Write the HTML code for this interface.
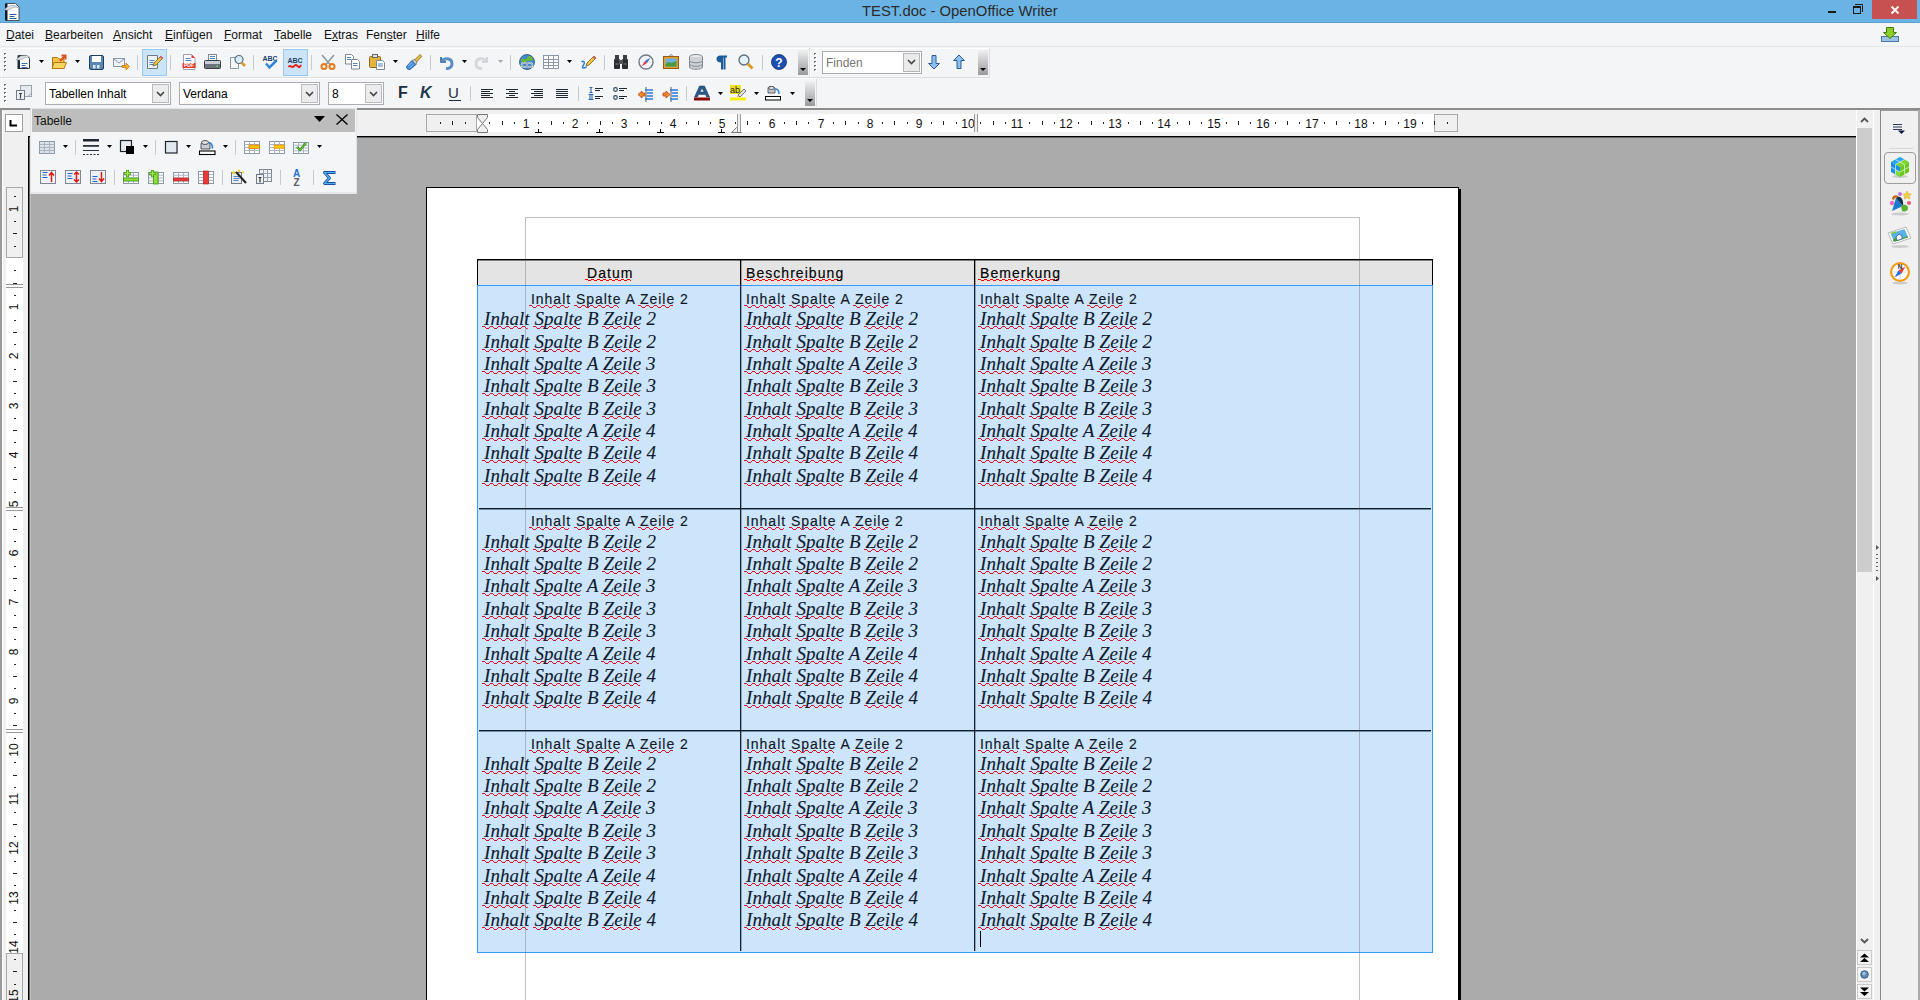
<!DOCTYPE html><html><head><meta charset="utf-8"><title>TEST.doc - OpenOffice Writer</title><style>
*{margin:0;padding:0;box-sizing:border-box}
html,body{width:1920px;height:1000px;overflow:hidden;background:#ababab;font-family:"Liberation Sans",sans-serif}
body{position:relative}
.a{position:absolute}
.t{position:absolute;white-space:nowrap;line-height:1}
svg{position:absolute;overflow:visible}
u{text-decoration:underline;text-underline-offset:1px}
.w{position:relative}
.wv{position:absolute;left:-2px;width:100%;height:3px;overflow:hidden;z-index:-1}
.t{z-index:0}
</style></head><body>
<div class="a" style="left:0px;top:0px;width:1920px;height:22px;background:#6ab4e5"></div>
<div class="a" style="left:0px;top:22px;width:1920px;height:1px;background:#5c9fcd"></div>
<div class="t" style="left:862px;top:4px;font-size:14.85px;color:#2b2b2b">TEST.doc - OpenOffice Writer</div>
<svg style="left:4px;top:3px" width="16" height="16" viewBox="0 0 16 16"><path d="M2.5 0.5h9l3.5 3.5v13.5h-12.5z" fill="#fff" stroke="#333" stroke-width="0.8"/><path d="M1 0.5h2.5v17H1z" fill="#0d1a2a"/><path d="M0 7c3-4 7-5 10-4.5 2 0 3 1 4 2-3-1-6 0-9 2.5z" fill="#d8dde3" stroke="#7a8590" stroke-width="0.5"/><path d="M5.5 11.5h7M5.5 13.5h5M5.5 15.5h7" stroke="#2a5a9a" stroke-width="1"/></svg>
<div class="a" style="left:1828px;top:11px;width:8px;height:2px;background:#1a1a1a"></div>
<svg style="left:1853px;top:4px" width="11" height="10" viewBox="0 0 11 10"><rect x="0.5" y="2.5" width="7" height="7" fill="none" stroke="#1a1a1a"/><rect x="0" y="2" width="8" height="2" fill="#1a1a1a"/><path d="M2 0.5h7.5V8" fill="none" stroke="#1a1a1a"/></svg>
<div class="a" style="left:1872px;top:0px;width:45px;height:19px;background:#c75050"></div>
<svg style="left:1891px;top:6px" width="8" height="8" viewBox="0 0 8 8"><path d="M0.5 0.5l7 7M7.5 0.5l-7 7" stroke="#fff" stroke-width="1.8"/></svg>
<div class="a" style="left:0px;top:23px;width:1920px;height:24px;background:#f4f5f7"></div>
<div class="a" style="left:0px;top:46px;width:1920px;height:1px;background:#e6e7e9"></div>
<div class="t" style="left:6px;top:29px;font-size:12px;color:#111"><u>D</u>atei</div>
<div class="t" style="left:45px;top:29px;font-size:12px;color:#111"><u>B</u>earbeiten</div>
<div class="t" style="left:113px;top:29px;font-size:12px;color:#111"><u>A</u>nsicht</div>
<div class="t" style="left:165px;top:29px;font-size:12px;color:#111"><u>E</u>infügen</div>
<div class="t" style="left:224px;top:29px;font-size:12px;color:#111"><u>F</u>ormat</div>
<div class="t" style="left:274px;top:29px;font-size:12px;color:#111"><u>T</u>abelle</div>
<div class="t" style="left:324px;top:29px;font-size:12px;color:#111">E<u>x</u>tras</div>
<div class="t" style="left:366px;top:29px;font-size:12px;color:#111">Fen<u>s</u>ter</div>
<div class="t" style="left:416px;top:29px;font-size:12px;color:#111"><u>H</u>ilfe</div>
<svg style="left:1880px;top:26px" width="20" height="17" viewBox="0 0 20 17"><rect x="1.5" y="10.5" width="17" height="5" fill="#9cc3e6" stroke="#4a78a8"/><path d="M6.5 1.5h7v5h3l-6.5 6-6.5-6h3z" fill="#8ccf2a" stroke="#3d7a0a"/></svg>
<div class="a" style="left:0px;top:47px;width:1920px;height:61px;background:#f4f5f7"></div>
<div class="a" style="left:0px;top:77px;width:990px;height:1px;background:#dcdde0"></div>
<div class="a" style="left:0px;top:108px;width:1920px;height:2px;background:#8c8c8c"></div>
<div class="a" style="left:1px;top:48px;width:809px;height:29px;border-left:1px solid #fff;border-top:1px solid #fff"></div>
<div class="a" style="left:809px;top:48px;width:1px;height:29px;background:#e0e1e4"></div>
<div class="a" style="left:810px;top:48px;width:180px;height:29px;border-left:1px solid #fff;border-top:1px solid #fff;border-right:1px solid #dcdde0"></div>
<div class="a" style="left:1px;top:78px;width:816px;height:29px;border-left:1px solid #fff;border-top:1px solid #fff;border-right:1px solid #dcdde0"></div>
<svg style="left:4px;top:53px" width="4" height="20" viewBox="0 0 4 20"><rect x="1" y="1" width="2" height="2" fill="#fff"/><rect x="0" y="0" width="2" height="1" fill="#6a6a6a"/><rect x="0" y="1" width="1" height="1" fill="#8a8a8a"/><rect x="1" y="5" width="2" height="2" fill="#fff"/><rect x="0" y="4" width="2" height="1" fill="#6a6a6a"/><rect x="0" y="5" width="1" height="1" fill="#8a8a8a"/><rect x="1" y="9" width="2" height="2" fill="#fff"/><rect x="0" y="8" width="2" height="1" fill="#6a6a6a"/><rect x="0" y="9" width="1" height="1" fill="#8a8a8a"/><rect x="1" y="13" width="2" height="2" fill="#fff"/><rect x="0" y="12" width="2" height="1" fill="#6a6a6a"/><rect x="0" y="13" width="1" height="1" fill="#8a8a8a"/><rect x="1" y="17" width="2" height="2" fill="#fff"/><rect x="0" y="16" width="2" height="1" fill="#6a6a6a"/><rect x="0" y="17" width="1" height="1" fill="#8a8a8a"/></svg>
<svg style="left:16px;top:54px" width="16" height="16" viewBox="0 0 16 16"><path d="M2.5 1.5h8l3 3v10h-11z" fill="#fff" stroke="#3a3f46"/><path d="M1.5 1.5h2.5v13.5H1.5z" fill="#1b2a3a"/><path d="M0 6c3-4 7-5 10-4.5 2 0 3 1 4 2-3-1-6 0-9 2.5z" fill="#d8dde3" stroke="#7a8590" stroke-width="0.5"/><path d="M5.5 9.5h6M5.5 11.5h4M5.5 13.5h6" stroke="#3a6fb0"/></svg>
<svg style="left:39px;top:60px" width="5" height="3" viewBox="0 0 5 3"><path d="M0 0h5L2.5 3z" fill="#000"/></svg>
<svg style="left:51px;top:54px" width="16" height="16" viewBox="0 0 16 16"><path d="M1.5 3.5h5l1.5 1.5h5v9.5h-11.5z" fill="#f5c342" stroke="#b7761a"/><path d="M3 8.5h12.5l-2.5 6H1z" fill="#fbd760" stroke="#b7761a"/><path d="M9 7l5-5M10.5 1.5h4v4" stroke="#e0521b" stroke-width="2" fill="none"/></svg>
<svg style="left:75px;top:60px" width="5" height="3" viewBox="0 0 5 3"><path d="M0 0h5L2.5 3z" fill="#000"/></svg>
<svg style="left:88px;top:55px" width="16" height="16" viewBox="0 0 16 16"><rect x="1.5" y="0.5" width="14" height="14" rx="1.5" fill="#5b86ad" stroke="#1d3f66"/><rect x="4" y="1" width="9" height="6" fill="#fff"/><rect x="5" y="10" width="2.5" height="3.5" fill="#dfe6ee"/><rect x="9" y="10" width="2.5" height="3.5" fill="#dfe6ee"/></svg>
<svg style="left:113px;top:56px" width="16" height="16" viewBox="0 0 16 16"><rect x="0.5" y="2.5" width="11" height="8" fill="#eef1f5" stroke="#8a98a8"/><path d="M0.5 2.5l5.5 4.5 5.5-4.5" stroke="#8a98a8" fill="none"/><path d="M9 9.5h4v-2.5l3.5 3.5-3.5 3.5v-2.5h-4z" fill="#f5b72a" stroke="#c0761a" stroke-width="0.8"/></svg>
<div class="a" style="left:137px;top:55px;width:1px;height:15px;background:#c8c9cc"></div>
<div class="a" style="left:142px;top:49px;width:25px;height:27px;background:#cce4f7;border:1px solid #99c9f0"></div>
<svg style="left:146px;top:54px" width="16" height="16" viewBox="0 0 16 16"><path d="M1.5 1.5h10v13h-10z" fill="#eef2f7" stroke="#6f7a86"/><path d="M3.5 6.5h5M3.5 8.5h4M3.5 10.5h5" stroke="#4f82c0"/><path d="M7 12l1-3 6.5-6.5 2 2L10 11z" fill="#f3c83a" stroke="#6a5a2a" stroke-width="0.8"/><path d="M14.5 2.5l2 2" stroke="#e05a70" stroke-width="2"/></svg>
<div class="a" style="left:170px;top:55px;width:1px;height:15px;background:#c8c9cc"></div>
<svg style="left:181px;top:54px" width="16" height="16" viewBox="0 0 16 16"><path d="M2.5 0.5h8l3.5 3.5v11.5h-11.5z" fill="#fff" stroke="#9aa3ad"/><path d="M10.5 0.5v3.5h3.5" fill="#e33" /><path d="M4.5 4.5h5M4.5 6.5h6" stroke="#4f82c0"/><rect x="1.5" y="9" width="13" height="5" fill="#e03a2a"/><text x="8" y="13.3" font-size="5" font-family="Liberation Sans" font-weight="bold" fill="#fff" text-anchor="middle">PDF</text></svg>
<svg style="left:204px;top:54px" width="16" height="16" viewBox="0 0 16 16"><rect x="4.5" y="0.5" width="8" height="6" fill="#fff" stroke="#7d8894"/><path d="M6 2.5h5M6 4.5h5" stroke="#4f82c0"/><rect x="0.5" y="6.5" width="16" height="8" rx="1" fill="#6c737b" stroke="#3a3f46"/><rect x="1" y="7" width="15" height="3" fill="#c9ced4"/><rect x="12" y="11.5" width="2" height="1.5" fill="#5c5"/></svg>
<svg style="left:229px;top:54px" width="16" height="16" viewBox="0 0 16 16"><path d="M1.5 3.5h8v11h-8z" fill="#f4f6f8" stroke="#8a96a3"/><circle cx="10" cy="5.5" r="4" fill="#d7ecfa" stroke="#5b6b7a" stroke-width="1.2"/><path d="M12.5 8.5l3.5 3.5" stroke="#d79a2a" stroke-width="2.5"/></svg>
<div class="a" style="left:253px;top:55px;width:1px;height:15px;background:#c8c9cc"></div>
<svg style="left:262px;top:54px" width="16" height="16" viewBox="0 0 16 16"><text x="8" y="6.5" font-size="7" font-family="Liberation Sans" font-weight="bold" fill="#1d3f66" text-anchor="middle">ABC</text><path d="M4 9.5l3.5 4 7-7" stroke="#2f86d9" stroke-width="2.5" fill="none"/></svg>
<div class="a" style="left:283px;top:49px;width:25px;height:27px;background:#cce4f7;border:1px solid #99c9f0"></div>
<svg style="left:287px;top:56px" width="16" height="16" viewBox="0 0 16 16"><text x="8" y="7" font-size="7" font-family="Liberation Sans" font-weight="bold" fill="#1d3f66" text-anchor="middle">ABC</text><path d="M1.5 11c2-3 3 1.5 5-0.5s3-2 4.5 0 2-1 3.5-1" stroke="#e0201a" stroke-width="2" fill="none"/></svg>
<div class="a" style="left:311px;top:55px;width:1px;height:15px;background:#c8c9cc"></div>
<svg style="left:320px;top:54px" width="16" height="16" viewBox="0 0 16 16"><path d="M2 1l8.5 10M14 1L5.5 11" stroke="#8a96a3" stroke-width="1.5"/><circle cx="4" cy="12.5" r="2.5" fill="none" stroke="#e87a1a" stroke-width="2"/><circle cx="12" cy="12.5" r="2.5" fill="none" stroke="#e87a1a" stroke-width="2"/></svg>
<svg style="left:345px;top:54px" width="16" height="16" viewBox="0 0 16 16"><path d="M0.5 0.5h6l2 2v7.5h-8z" fill="#fff" stroke="#7d8894"/><path d="M2 3.5h4M2 5.5h4" stroke="#4f82c0"/><path d="M6.5 5.5h6l2 2v7.5h-8z" fill="#fff" stroke="#7d8894"/><path d="M8 9.5h4.5M8 11.5h4.5" stroke="#4f82c0"/></svg>
<svg style="left:369px;top:54px" width="16" height="16" viewBox="0 0 16 16"><rect x="0.5" y="2.5" width="11" height="11" rx="1" fill="#e6b43a" stroke="#8a6a20"/><rect x="3.5" y="0.5" width="5" height="3" fill="#dfe3e8" stroke="#666"/><path d="M7.5 6.5h6l2 2v7h-8z" fill="#fff" stroke="#7d8894"/><path d="M9 10h5M9 12h5" stroke="#4f82c0"/></svg>
<svg style="left:393px;top:60px" width="5" height="3" viewBox="0 0 5 3"><path d="M0 0h5L2.5 3z" fill="#000"/></svg>
<svg style="left:406px;top:54px" width="16" height="16" viewBox="0 0 16 16"><path d="M0.5 12.5L6 6.5l4 4-6 5c-2 0.5-3.5-1-3.5-3z" fill="#3f8ee0" stroke="#1d4f9a" stroke-width="0.8"/><path d="M2 12l4-3.5M3.5 14l4-3.5" stroke="#9cc8f0" stroke-width="0.8"/><path d="M8.5 6l5.5-5.5 1.8 1.8L10.5 8z" fill="#e8b83a" stroke="#8a6a20" stroke-width="0.8"/><path d="M6 6.5l2.5-1 2.5 2.5-1 2.5z" fill="#c8ced6" stroke="#555" stroke-width="0.6"/></svg>
<div class="a" style="left:430px;top:55px;width:1px;height:15px;background:#c8c9cc"></div>
<svg style="left:438px;top:54px" width="16" height="16" viewBox="0 0 16 16"><path d="M3 3v5h5" stroke="#2a5a8a" stroke-width="1.5" fill="#7fb0e0"/><path d="M4 7.5c2-4 10-4 10 2.5 0 3-3 5-6 4.5" stroke="#5b8ec0" stroke-width="3" fill="none"/></svg>
<svg style="left:462px;top:60px" width="5" height="3" viewBox="0 0 5 3"><path d="M0 0h5L2.5 3z" fill="#000"/></svg>
<svg style="left:474px;top:54px" width="16" height="16" viewBox="0 0 16 16"><path d="M13 3v5H8" stroke="#c8cbd0" stroke-width="1.5" fill="#e0e2e5"/><path d="M12 7.5c-2-4-10-4-10 2.5 0 3 3 5 6 4.5" stroke="#d5d8dc" stroke-width="3" fill="none"/></svg>
<svg style="left:498px;top:60px" width="5" height="3" viewBox="0 0 5 3"><path d="M0 0h5L2.5 3z" fill="#aaa"/></svg>
<div class="a" style="left:510px;top:55px;width:1px;height:15px;background:#c8c9cc"></div>
<svg style="left:519px;top:54px" width="16" height="16" viewBox="0 0 16 16"><circle cx="8" cy="8" r="7.5" fill="#3f8ad0" stroke="#2a4a6a" stroke-width="0.8"/><path d="M2 5c2-1 3 1 5 0s1-3 4-3c2 1 3 2 3 4-2 0-3 1-5 1s-2 2-4 2-3-1-3-4z" fill="#6ab83a"/><rect x="2.5" y="9" width="5.5" height="4" rx="2" fill="none" stroke="#fff" stroke-width="1.6"/><rect x="8" y="9" width="5.5" height="4" rx="2" fill="none" stroke="#fff" stroke-width="1.6"/><rect x="2.5" y="9" width="5.5" height="4" rx="2" fill="none" stroke="#2a4a5a" stroke-width="0.5"/><rect x="8" y="9" width="5.5" height="4" rx="2" fill="none" stroke="#2a4a5a" stroke-width="0.5"/></svg>
<svg style="left:543px;top:55px" width="16" height="16" viewBox="0 0 16 16"><rect x="0.5" y="0.5" width="15" height="13" fill="#fff" stroke="#8a98a8"/><path d="M0.5 4.5h15M0.5 7.5h15M0.5 10.5h15M5.5 0.5v13M10.5 0.5v13" stroke="#8a98a8"/></svg>
<svg style="left:567px;top:60px" width="5" height="3" viewBox="0 0 5 3"><path d="M0 0h5L2.5 3z" fill="#000"/></svg>
<svg style="left:580px;top:54px" width="16" height="16" viewBox="0 0 16 16"><path d="M1.5 8c2-2 4 0 2 3s-1 4 3 2" stroke="#2f7fd9" stroke-width="1.5" fill="none"/><path d="M6 12l1-3 7-7 2 2-7 7z" fill="#f3c83a" stroke="#6a5a2a" stroke-width="0.8"/><path d="M13.5 2.5l2 2" stroke="#e05a70" stroke-width="2"/></svg>
<div class="a" style="left:604px;top:55px;width:1px;height:15px;background:#c8c9cc"></div>
<svg style="left:613px;top:54px" width="16" height="16" viewBox="0 0 16 16"><rect x="1" y="5" width="6" height="10" rx="1" fill="#2a2d31"/><rect x="9" y="5" width="6" height="10" rx="1" fill="#2a2d31"/><rect x="2" y="1" width="4" height="5" fill="#3a3f46"/><rect x="10" y="1" width="4" height="5" fill="#3a3f46"/><rect x="6" y="6" width="4" height="4" fill="#555"/><path d="M2.5 10h3M10.5 10h3" stroke="#888"/></svg>
<svg style="left:638px;top:54px" width="16" height="16" viewBox="0 0 16 16"><circle cx="8" cy="8" r="7" fill="#f4f7fa" stroke="#6f7a86" stroke-width="1.4"/><path d="M3 8h10M8 3v10" stroke="#ccd" stroke-width="0.6"/><path d="M12.5 3.5L9 9 7 7z" fill="#2f6fd9"/><path d="M3.5 12.5L7 7 9 9z" fill="#e33"/></svg>
<svg style="left:663px;top:54px" width="16" height="16" viewBox="0 0 16 16"><path d="M5 3l3-2.5 3 2.5" stroke="#7d8894" fill="none"/><rect x="0.5" y="2.5" width="15" height="12" fill="#e0a030" stroke="#9a5a10"/><rect x="2.5" y="4.5" width="11" height="8" fill="#6ab0e5"/><path d="M2.5 10l3-2 3 1 5-2v5.5h-11z" fill="#4a9a3a"/></svg>
<svg style="left:689px;top:54px" width="16" height="16" viewBox="0 0 16 16"><ellipse cx="7" cy="3" rx="6.5" ry="2.5" fill="#e9ebee" stroke="#7d8894"/><path d="M0.5 3v10c0 3 13 3 13 0V3" fill="#cfd3d8" stroke="#7d8894"/><path d="M0.5 6.5c0 3 13 3 13 0M0.5 10c0 3 13 3 13 0" stroke="#7d8894" fill="none"/></svg>
<svg style="left:715px;top:54px" width="16" height="16" viewBox="0 0 16 16"><path d="M5 1.5h7v2h-1.5v12H8.5V3.5H8v12H6V8.5C3 8.5 1.5 7 1.5 5S3 1.5 5 1.5z" fill="#1d5a9a"/></svg>
<svg style="left:738px;top:54px" width="16" height="16" viewBox="0 0 16 16"><circle cx="6" cy="6" r="5" fill="#e3f1fb" stroke="#5b6b7a" stroke-width="1.3"/><path d="M9.5 9.5l5 5" stroke="#d79a2a" stroke-width="3"/></svg>
<div class="a" style="left:762px;top:55px;width:1px;height:15px;background:#c8c9cc"></div>
<svg style="left:771px;top:54px" width="16" height="16" viewBox="0 0 16 16"><circle cx="8" cy="8" r="7.5" fill="#1d4fb0" stroke="#0d2a70" stroke-width="0.8"/><text x="8" y="13" font-size="12" font-weight="bold" font-family="Liberation Sans" fill="#fff" text-anchor="middle">?</text></svg>
<div class="a" style="left:798px;top:50px;width:10px;height:25px;background:linear-gradient(#f0f0f0,#9a9a9a)"></div>
<svg style="left:800px;top:68px" width="6" height="4" viewBox="0 0 6 4"><path d="M0 0h6L3 3z" fill="#000"/></svg>
<svg style="left:814px;top:53px" width="4" height="20" viewBox="0 0 4 20"><rect x="1" y="1" width="2" height="2" fill="#fff"/><rect x="0" y="0" width="2" height="1" fill="#6a6a6a"/><rect x="0" y="1" width="1" height="1" fill="#8a8a8a"/><rect x="1" y="5" width="2" height="2" fill="#fff"/><rect x="0" y="4" width="2" height="1" fill="#6a6a6a"/><rect x="0" y="5" width="1" height="1" fill="#8a8a8a"/><rect x="1" y="9" width="2" height="2" fill="#fff"/><rect x="0" y="8" width="2" height="1" fill="#6a6a6a"/><rect x="0" y="9" width="1" height="1" fill="#8a8a8a"/><rect x="1" y="13" width="2" height="2" fill="#fff"/><rect x="0" y="12" width="2" height="1" fill="#6a6a6a"/><rect x="0" y="13" width="1" height="1" fill="#8a8a8a"/><rect x="1" y="17" width="2" height="2" fill="#fff"/><rect x="0" y="16" width="2" height="1" fill="#6a6a6a"/><rect x="0" y="17" width="1" height="1" fill="#8a8a8a"/></svg>
<div class="a" style="left:822px;top:51px;width:100px;height:23px;background:#fff;border:1px solid #a9aaad"></div>
<div class="a" style="left:903px;top:53px;width:17px;height:19px;background:#eaeaea;border:1px solid #b5b6b9"></div>
<svg style="left:907px;top:59px" width="9" height="6" viewBox="0 0 9 6"><path d="M1 1l3.5 3.5L8 1" stroke="#444" stroke-width="1.6" fill="none"/></svg>
<div class="t" style="left:826px;top:57px;font-size:12px;color:#777">Finden</div>
<svg style="left:927px;top:54px" width="14" height="16" viewBox="0 0 14 16"><path d="M5 1.5h4v8h3.5L7 15 1.5 9.5H5z" fill="#8ec0ee" stroke="#2a5a9a"/></svg>
<svg style="left:952px;top:54px" width="14" height="16" viewBox="0 0 14 16"><path d="M5 14.5h4v-8h3.5L7 1 1.5 6.5H5z" fill="#8ec0ee" stroke="#2a5a9a"/></svg>
<div class="a" style="left:978px;top:50px;width:10px;height:25px;background:linear-gradient(#f0f0f0,#9a9a9a)"></div>
<svg style="left:980px;top:68px" width="6" height="4" viewBox="0 0 6 4"><path d="M0 0h6L3 3z" fill="#000"/></svg>
<svg style="left:4px;top:84px" width="4" height="20" viewBox="0 0 4 20"><rect x="1" y="1" width="2" height="2" fill="#fff"/><rect x="0" y="0" width="2" height="1" fill="#6a6a6a"/><rect x="0" y="1" width="1" height="1" fill="#8a8a8a"/><rect x="1" y="5" width="2" height="2" fill="#fff"/><rect x="0" y="4" width="2" height="1" fill="#6a6a6a"/><rect x="0" y="5" width="1" height="1" fill="#8a8a8a"/><rect x="1" y="9" width="2" height="2" fill="#fff"/><rect x="0" y="8" width="2" height="1" fill="#6a6a6a"/><rect x="0" y="9" width="1" height="1" fill="#8a8a8a"/><rect x="1" y="13" width="2" height="2" fill="#fff"/><rect x="0" y="12" width="2" height="1" fill="#6a6a6a"/><rect x="0" y="13" width="1" height="1" fill="#8a8a8a"/><rect x="1" y="17" width="2" height="2" fill="#fff"/><rect x="0" y="16" width="2" height="1" fill="#6a6a6a"/><rect x="0" y="17" width="1" height="1" fill="#8a8a8a"/></svg>
<svg style="left:16px;top:85px" width="16" height="16" viewBox="0 0 16 16"><rect x="4.5" y="0.5" width="11" height="11" fill="#e6ebf0" stroke="#9aa3ad"/><path d="M12 11.5l3.5-3.5" stroke="#9aa3ad"/><rect x="0.5" y="5.5" width="8" height="9" fill="#eef1f4" stroke="#6f7a86"/><path d="M3 8.5h3M4.5 8.5v5" stroke="#3a3f46" stroke-width="1.2"/></svg>
<div class="a" style="left:45px;top:82px;width:126px;height:23px;background:#fff;border:1px solid #abadb3"></div>
<div class="a" style="left:152px;top:84px;width:17px;height:19px;background:#ececec;border:1px solid #b9babd"></div>
<svg style="left:156px;top:91px" width="9" height="6" viewBox="0 0 9 6"><path d="M1 1l3.5 3.5L8 1" stroke="#444" stroke-width="1.6" fill="none"/></svg>
<div class="t" style="left:49px;top:88px;font-size:12px;color:#000">Tabellen Inhalt</div>
<div class="a" style="left:179px;top:82px;width:141px;height:23px;background:#fff;border:1px solid #abadb3"></div>
<div class="a" style="left:301px;top:84px;width:17px;height:19px;background:#ececec;border:1px solid #b9babd"></div>
<svg style="left:305px;top:91px" width="9" height="6" viewBox="0 0 9 6"><path d="M1 1l3.5 3.5L8 1" stroke="#444" stroke-width="1.6" fill="none"/></svg>
<div class="t" style="left:183px;top:88px;font-size:12px;color:#000">Verdana</div>
<div class="a" style="left:328px;top:82px;width:56px;height:23px;background:#fff;border:1px solid #abadb3"></div>
<div class="a" style="left:365px;top:84px;width:17px;height:19px;background:#ececec;border:1px solid #b9babd"></div>
<svg style="left:369px;top:91px" width="9" height="6" viewBox="0 0 9 6"><path d="M1 1l3.5 3.5L8 1" stroke="#444" stroke-width="1.6" fill="none"/></svg>
<div class="t" style="left:332px;top:88px;font-size:12px;color:#000">8</div>
<div class="t" style="left:398px;top:85px;font-size:16px;font-weight:bold;color:#1d2d3d">F</div>
<div class="t" style="left:420px;top:85px;font-size:16px;font-weight:bold;font-style:italic;color:#1d3a50">K</div>
<div class="t" style="left:448px;top:85px;font-size:15px;color:#1d2d3d">U</div>
<div class="a" style="left:449px;top:100px;width:12px;height:1px;background:#1d2d3d"></div>
<div class="a" style="left:470px;top:86px;width:1px;height:15px;background:#c8c9cc"></div>
<svg style="left:481px;top:89px" width="14" height="10" viewBox="0 0 14 10"><rect x="0" y="0" width="12" height="1" fill="#1d2833"/><rect x="0" y="2" width="9" height="1" fill="#1d2833"/><rect x="0" y="4" width="12" height="1" fill="#1d2833"/><rect x="0" y="6" width="9" height="1" fill="#1d2833"/><rect x="0" y="8" width="12" height="1" fill="#1d2833"/></svg>
<svg style="left:506px;top:89px" width="14" height="10" viewBox="0 0 14 10"><rect x="0" y="0" width="12" height="1" fill="#1d2833"/><rect x="3" y="2" width="6" height="1" fill="#1d2833"/><rect x="0" y="4" width="12" height="1" fill="#1d2833"/><rect x="3" y="6" width="6" height="1" fill="#1d2833"/><rect x="0" y="8" width="12" height="1" fill="#1d2833"/></svg>
<svg style="left:531px;top:89px" width="14" height="10" viewBox="0 0 14 10"><rect x="0" y="0" width="12" height="1" fill="#1d2833"/><rect x="3" y="2" width="9" height="1" fill="#1d2833"/><rect x="0" y="4" width="12" height="1" fill="#1d2833"/><rect x="3" y="6" width="9" height="1" fill="#1d2833"/><rect x="0" y="8" width="12" height="1" fill="#1d2833"/></svg>
<svg style="left:556px;top:89px" width="14" height="10" viewBox="0 0 14 10"><rect x="0" y="0" width="12" height="1" fill="#1d2833"/><rect x="0" y="2" width="12" height="1" fill="#1d2833"/><rect x="0" y="4" width="12" height="1" fill="#1d2833"/><rect x="0" y="6" width="12" height="1" fill="#1d2833"/><rect x="0" y="8" width="12" height="1" fill="#1d2833"/></svg>
<div class="a" style="left:578px;top:86px;width:1px;height:15px;background:#c8c9cc"></div>
<svg style="left:588px;top:86px" width="16" height="16" viewBox="0 0 16 16"><path d="M1.5 1.5h3M3 1.5v5M1.5 6.5h3M0.5 8.5h5M2 8.5v5M4 8.5v5M0.5 13.5h5" stroke="#2f6aa8" stroke-width="1.1"/><path d="M7 2.5h8M7 4.5h5M7 10.5h8M7 12.5h5" stroke="#1d2833" stroke-width="1"/></svg>
<svg style="left:613px;top:86px" width="16" height="16" viewBox="0 0 16 16"><circle cx="2.5" cy="3.5" r="1.8" fill="#fff" stroke="#2a4a6a" stroke-width="1.2"/><circle cx="2.5" cy="11.5" r="1.8" fill="#fff" stroke="#2a4a6a" stroke-width="1.2"/><path d="M6 2.5h8M6 4.5h5M6 10.5h8M6 12.5h5" stroke="#1d2833" stroke-width="1"/></svg>
<svg style="left:637px;top:86px" width="16" height="16" viewBox="0 0 16 16"><path d="M9 1v15" stroke="#333" stroke-width="0.8"/><path d="M8 4h8M10 7h6M10 10h6M8 13h8" stroke="#2a7ad9" stroke-width="1.4"/><path d="M1 8.5l4-3.5v2h3v3H5v2z" fill="#f08a2a" stroke="#c0401a" stroke-width="0.8"/></svg>
<svg style="left:662px;top:86px" width="16" height="16" viewBox="0 0 16 16"><path d="M9 1v15" stroke="#333" stroke-width="0.8"/><path d="M8 4h8M10 7h6M10 10h6M8 13h8" stroke="#2a7ad9" stroke-width="1.4"/><path d="M8 8.5L4 5v2H1v3h3v2z" fill="#f08a2a" stroke="#c0401a" stroke-width="0.8"/></svg>
<div class="a" style="left:686px;top:86px;width:1px;height:15px;background:#c8c9cc"></div>
<svg style="left:694px;top:85px" width="16" height="16" viewBox="0 0 16 16"><path d="M5.5 1h5l5 11h-3l-1-2.5h-7l-1 2.5h-3zM6 7h4L8 3z" fill="#2a5a8a" stroke="#1d3a60" stroke-width="0.5" fill-rule="evenodd"/><rect x="0" y="12.5" width="16" height="3" fill="#8a0a0a"/></svg>
<svg style="left:718px;top:92px" width="5" height="3" viewBox="0 0 5 3"><path d="M0 0h5L2.5 3z" fill="#000"/></svg>
<svg style="left:730px;top:85px" width="16" height="16" viewBox="0 0 16 16"><rect x="0" y="0" width="11" height="9" fill="#f0e020"/><text x="0" y="8" font-size="9" font-family="Liberation Sans" fill="#222">ab</text><path d="M8 10l6-6 2 2-6 6z" fill="#dfe3e8" stroke="#555" stroke-width="0.8"/><path d="M8 10l-1 2 2-0.5" fill="#e08030"/><rect x="0" y="12.5" width="16" height="3" fill="#f5ef10"/></svg>
<svg style="left:754px;top:92px" width="5" height="3" viewBox="0 0 5 3"><path d="M0 0h5L2.5 3z" fill="#000"/></svg>
<svg style="left:765px;top:85px" width="16" height="16" viewBox="0 0 16 16"><path d="M3 3c0-2 6-2 7 0v5l-7 0z" fill="#c0c6cc" stroke="#444" stroke-width="0.8"/><ellipse cx="6.5" cy="3" rx="3" ry="1.5" fill="#dfe3e8" stroke="#444" stroke-width="0.8"/><path d="M10 4c3 0 4 2 4 5" stroke="#2f86d9" stroke-width="1.5" fill="none"/><rect x="0.5" y="11.5" width="15" height="3.5" fill="#fff" stroke="#000"/></svg>
<svg style="left:790px;top:92px" width="5" height="3" viewBox="0 0 5 3"><path d="M0 0h5L2.5 3z" fill="#000"/></svg>
<div class="a" style="left:805px;top:81px;width:10px;height:25px;background:linear-gradient(#f0f0f0,#9a9a9a)"></div>
<svg style="left:807px;top:99px" width="6" height="4" viewBox="0 0 6 4"><path d="M0 0h6L3 3z" fill="#000"/></svg>
<div class="a" style="left:0px;top:110px;width:1856px;height:27px;background:#f0f0f0"></div>
<div class="a" style="left:28px;top:136px;width:1828px;height:1px;background:#000"></div>
<div class="a" style="left:28px;top:137px;width:1828px;height:1px;background:#666"></div>
<div class="a" style="left:0px;top:137px;width:28px;height:863px;background:#f0f0f0"></div>
<div class="a" style="left:0px;top:110px;width:2px;height:890px;background:#9a9a9a"></div>
<div class="a" style="left:2px;top:110px;width:1px;height:890px;background:#fff"></div>
<div class="a" style="left:28px;top:137px;width:1px;height:863px;background:#000"></div>
<div class="a" style="left:29px;top:137px;width:1px;height:863px;background:#666"></div>
<div class="a" style="left:30px;top:137px;width:1px;height:863px;background:#bdbdbd"></div>
<div class="a" style="left:5px;top:114px;width:18px;height:18px;background:#fff;border:1px solid #a0a0a0"></div>
<svg style="left:9px;top:120px" width="10" height="8" viewBox="0 0 10 8"><path d="M1.5 0v5.5H8" fill="none" stroke="#000" stroke-width="2"/></svg>
<div class="a" style="left:426px;top:114px;width:51px;height:18px;background:#f0f0f0;border:1px solid #a8a8a8"></div>
<div class="a" style="left:477px;top:114px;width:957px;height:18px;background:#fff"></div>
<div class="a" style="left:1434px;top:114px;width:24px;height:18px;background:#f0f0f0;border:1px solid #a8a8a8"></div>
<div class="a" style="left:6px;top:187px;width:17px;height:71px;background:#f0f0f0;border:1px solid #a8a8a8"></div>
<div class="a" style="left:6px;top:258px;width:17px;height:695px;background:#fff"></div>
<div class="a" style="left:6px;top:953px;width:17px;height:60px;background:#f0f0f0;border:1px solid #a8a8a8"></div>
<div class="a" style="left:440px;top:122px;width:1px;height:2px;background:#222"></div>
<div class="a" style="left:452px;top:121px;width:1px;height:4px;background:#222"></div>
<div class="a" style="left:465px;top:122px;width:1px;height:2px;background:#222"></div>
<div class="a" style="left:489px;top:122px;width:1px;height:2px;background:#222"></div>
<div class="a" style="left:502px;top:121px;width:1px;height:4px;background:#222"></div>
<div class="a" style="left:514px;top:122px;width:1px;height:2px;background:#222"></div>
<div class="t" style="left:514px;top:118px;font-size:12px;color:#111;width:24px;text-align:center">1</div>
<div class="a" style="left:538px;top:122px;width:1px;height:2px;background:#222"></div>
<div class="a" style="left:551px;top:121px;width:1px;height:4px;background:#222"></div>
<div class="a" style="left:563px;top:122px;width:1px;height:2px;background:#222"></div>
<div class="t" style="left:563px;top:118px;font-size:12px;color:#111;width:24px;text-align:center">2</div>
<div class="a" style="left:587px;top:122px;width:1px;height:2px;background:#222"></div>
<div class="a" style="left:600px;top:121px;width:1px;height:4px;background:#222"></div>
<div class="a" style="left:612px;top:122px;width:1px;height:2px;background:#222"></div>
<div class="t" style="left:612px;top:118px;font-size:12px;color:#111;width:24px;text-align:center">3</div>
<div class="a" style="left:637px;top:122px;width:1px;height:2px;background:#222"></div>
<div class="a" style="left:649px;top:121px;width:1px;height:4px;background:#222"></div>
<div class="a" style="left:661px;top:122px;width:1px;height:2px;background:#222"></div>
<div class="t" style="left:661px;top:118px;font-size:12px;color:#111;width:24px;text-align:center">4</div>
<div class="a" style="left:686px;top:122px;width:1px;height:2px;background:#222"></div>
<div class="a" style="left:698px;top:121px;width:1px;height:4px;background:#222"></div>
<div class="a" style="left:710px;top:122px;width:1px;height:2px;background:#222"></div>
<div class="t" style="left:710px;top:118px;font-size:12px;color:#111;width:24px;text-align:center">5</div>
<div class="a" style="left:735px;top:122px;width:1px;height:2px;background:#222"></div>
<div class="a" style="left:747px;top:121px;width:1px;height:4px;background:#222"></div>
<div class="a" style="left:759px;top:122px;width:1px;height:2px;background:#222"></div>
<div class="t" style="left:760px;top:118px;font-size:12px;color:#111;width:24px;text-align:center">6</div>
<div class="a" style="left:784px;top:122px;width:1px;height:2px;background:#222"></div>
<div class="a" style="left:796px;top:121px;width:1px;height:4px;background:#222"></div>
<div class="a" style="left:808px;top:122px;width:1px;height:2px;background:#222"></div>
<div class="t" style="left:809px;top:118px;font-size:12px;color:#111;width:24px;text-align:center">7</div>
<div class="a" style="left:833px;top:122px;width:1px;height:2px;background:#222"></div>
<div class="a" style="left:845px;top:121px;width:1px;height:4px;background:#222"></div>
<div class="a" style="left:858px;top:122px;width:1px;height:2px;background:#222"></div>
<div class="t" style="left:858px;top:118px;font-size:12px;color:#111;width:24px;text-align:center">8</div>
<div class="a" style="left:882px;top:122px;width:1px;height:2px;background:#222"></div>
<div class="a" style="left:894px;top:121px;width:1px;height:4px;background:#222"></div>
<div class="a" style="left:907px;top:122px;width:1px;height:2px;background:#222"></div>
<div class="t" style="left:907px;top:118px;font-size:12px;color:#111;width:24px;text-align:center">9</div>
<div class="a" style="left:931px;top:122px;width:1px;height:2px;background:#222"></div>
<div class="a" style="left:943px;top:121px;width:1px;height:4px;background:#222"></div>
<div class="a" style="left:956px;top:122px;width:1px;height:2px;background:#222"></div>
<div class="t" style="left:956px;top:118px;font-size:12px;color:#111;width:24px;text-align:center">10</div>
<div class="a" style="left:980px;top:122px;width:1px;height:2px;background:#222"></div>
<div class="a" style="left:993px;top:121px;width:1px;height:4px;background:#222"></div>
<div class="a" style="left:1005px;top:122px;width:1px;height:2px;background:#222"></div>
<div class="t" style="left:1005px;top:118px;font-size:12px;color:#111;width:24px;text-align:center">11</div>
<div class="a" style="left:1029px;top:122px;width:1px;height:2px;background:#222"></div>
<div class="a" style="left:1042px;top:121px;width:1px;height:4px;background:#222"></div>
<div class="a" style="left:1054px;top:122px;width:1px;height:2px;background:#222"></div>
<div class="t" style="left:1054px;top:118px;font-size:12px;color:#111;width:24px;text-align:center">12</div>
<div class="a" style="left:1078px;top:122px;width:1px;height:2px;background:#222"></div>
<div class="a" style="left:1091px;top:121px;width:1px;height:4px;background:#222"></div>
<div class="a" style="left:1103px;top:122px;width:1px;height:2px;background:#222"></div>
<div class="t" style="left:1103px;top:118px;font-size:12px;color:#111;width:24px;text-align:center">13</div>
<div class="a" style="left:1128px;top:122px;width:1px;height:2px;background:#222"></div>
<div class="a" style="left:1140px;top:121px;width:1px;height:4px;background:#222"></div>
<div class="a" style="left:1152px;top:122px;width:1px;height:2px;background:#222"></div>
<div class="t" style="left:1152px;top:118px;font-size:12px;color:#111;width:24px;text-align:center">14</div>
<div class="a" style="left:1177px;top:122px;width:1px;height:2px;background:#222"></div>
<div class="a" style="left:1189px;top:121px;width:1px;height:4px;background:#222"></div>
<div class="a" style="left:1201px;top:122px;width:1px;height:2px;background:#222"></div>
<div class="t" style="left:1202px;top:118px;font-size:12px;color:#111;width:24px;text-align:center">15</div>
<div class="a" style="left:1226px;top:122px;width:1px;height:2px;background:#222"></div>
<div class="a" style="left:1238px;top:121px;width:1px;height:4px;background:#222"></div>
<div class="a" style="left:1250px;top:122px;width:1px;height:2px;background:#222"></div>
<div class="t" style="left:1251px;top:118px;font-size:12px;color:#111;width:24px;text-align:center">16</div>
<div class="a" style="left:1275px;top:122px;width:1px;height:2px;background:#222"></div>
<div class="a" style="left:1287px;top:121px;width:1px;height:4px;background:#222"></div>
<div class="a" style="left:1299px;top:122px;width:1px;height:2px;background:#222"></div>
<div class="t" style="left:1300px;top:118px;font-size:12px;color:#111;width:24px;text-align:center">17</div>
<div class="a" style="left:1324px;top:122px;width:1px;height:2px;background:#222"></div>
<div class="a" style="left:1336px;top:121px;width:1px;height:4px;background:#222"></div>
<div class="a" style="left:1349px;top:122px;width:1px;height:2px;background:#222"></div>
<div class="t" style="left:1349px;top:118px;font-size:12px;color:#111;width:24px;text-align:center">18</div>
<div class="a" style="left:1373px;top:122px;width:1px;height:2px;background:#222"></div>
<div class="a" style="left:1385px;top:121px;width:1px;height:4px;background:#222"></div>
<div class="a" style="left:1398px;top:122px;width:1px;height:2px;background:#222"></div>
<div class="t" style="left:1398px;top:118px;font-size:12px;color:#111;width:24px;text-align:center">19</div>
<div class="a" style="left:1422px;top:122px;width:1px;height:2px;background:#222"></div>
<div class="a" style="left:1434px;top:121px;width:1px;height:4px;background:#222"></div>
<div class="a" style="left:1447px;top:122px;width:1px;height:2px;background:#222"></div>
<svg style="left:476px;top:114px" width="13" height="19" viewBox="0 0 13 19"><path d="M1.5 0.5h10v3l-5 6-5-6z M1.5 18.5h10v-3l-5-6-5 6z" fill="#efefef" stroke="#777"/></svg>
<svg style="left:535px;top:129px" width="7" height="4" viewBox="0 0 7 4"><path d="M3.5 0v3.5M0 3.5h7" stroke="#000"/></svg>
<svg style="left:596px;top:129px" width="7" height="4" viewBox="0 0 7 4"><path d="M3.5 0v3.5M0 3.5h7" stroke="#000"/></svg>
<svg style="left:657px;top:129px" width="7" height="4" viewBox="0 0 7 4"><path d="M3.5 0v3.5M0 3.5h7" stroke="#000"/></svg>
<svg style="left:718px;top:129px" width="7" height="4" viewBox="0 0 7 4"><path d="M3.5 0v3.5M0 3.5h7" stroke="#000"/></svg>
<svg style="left:731px;top:127px" width="11" height="6" viewBox="0 0 11 6"><path d="M0.5 5.5L5.5 0.5l5 5z" fill="#efefef" stroke="#777"/></svg>
<div class="a" style="left:737px;top:114px;width:4px;height:18px;border-left:1px solid #999;border-right:1px solid #999;background:#f0f0f0"></div>
<div class="a" style="left:974px;top:114px;width:4px;height:18px;border-left:1px solid #999;border-right:1px solid #999;background:#f0f0f0"></div>
<div class="a" style="left:14px;top:196px;width:2px;height:1px;background:#222"></div>
<div class="t" style="left:2px;top:203px;width:24px;height:12px;font-size:12px;color:#111;text-align:center;transform:rotate(-90deg)">1</div>
<div class="a" style="left:14px;top:221px;width:2px;height:1px;background:#222"></div>
<div class="a" style="left:13px;top:233px;width:4px;height:1px;background:#222"></div>
<div class="a" style="left:14px;top:246px;width:2px;height:1px;background:#222"></div>
<div class="a" style="left:14px;top:270px;width:2px;height:1px;background:#222"></div>
<div class="a" style="left:13px;top:283px;width:4px;height:1px;background:#222"></div>
<div class="a" style="left:14px;top:295px;width:2px;height:1px;background:#222"></div>
<div class="t" style="left:2px;top:301px;width:24px;height:12px;font-size:12px;color:#111;text-align:center;transform:rotate(-90deg)">1</div>
<div class="a" style="left:14px;top:320px;width:2px;height:1px;background:#222"></div>
<div class="a" style="left:13px;top:332px;width:4px;height:1px;background:#222"></div>
<div class="a" style="left:14px;top:344px;width:2px;height:1px;background:#222"></div>
<div class="t" style="left:2px;top:350px;width:24px;height:12px;font-size:12px;color:#111;text-align:center;transform:rotate(-90deg)">2</div>
<div class="a" style="left:14px;top:369px;width:2px;height:1px;background:#222"></div>
<div class="a" style="left:13px;top:381px;width:4px;height:1px;background:#222"></div>
<div class="a" style="left:14px;top:393px;width:2px;height:1px;background:#222"></div>
<div class="t" style="left:2px;top:400px;width:24px;height:12px;font-size:12px;color:#111;text-align:center;transform:rotate(-90deg)">3</div>
<div class="a" style="left:14px;top:418px;width:2px;height:1px;background:#222"></div>
<div class="a" style="left:13px;top:430px;width:4px;height:1px;background:#222"></div>
<div class="a" style="left:14px;top:442px;width:2px;height:1px;background:#222"></div>
<div class="t" style="left:2px;top:449px;width:24px;height:12px;font-size:12px;color:#111;text-align:center;transform:rotate(-90deg)">4</div>
<div class="a" style="left:14px;top:467px;width:2px;height:1px;background:#222"></div>
<div class="a" style="left:13px;top:479px;width:4px;height:1px;background:#222"></div>
<div class="a" style="left:14px;top:492px;width:2px;height:1px;background:#222"></div>
<div class="t" style="left:2px;top:498px;width:24px;height:12px;font-size:12px;color:#111;text-align:center;transform:rotate(-90deg)">5</div>
<div class="a" style="left:14px;top:516px;width:2px;height:1px;background:#222"></div>
<div class="a" style="left:13px;top:529px;width:4px;height:1px;background:#222"></div>
<div class="a" style="left:14px;top:541px;width:2px;height:1px;background:#222"></div>
<div class="t" style="left:2px;top:547px;width:24px;height:12px;font-size:12px;color:#111;text-align:center;transform:rotate(-90deg)">6</div>
<div class="a" style="left:14px;top:566px;width:2px;height:1px;background:#222"></div>
<div class="a" style="left:13px;top:578px;width:4px;height:1px;background:#222"></div>
<div class="a" style="left:14px;top:590px;width:2px;height:1px;background:#222"></div>
<div class="t" style="left:2px;top:596px;width:24px;height:12px;font-size:12px;color:#111;text-align:center;transform:rotate(-90deg)">7</div>
<div class="a" style="left:14px;top:615px;width:2px;height:1px;background:#222"></div>
<div class="a" style="left:13px;top:627px;width:4px;height:1px;background:#222"></div>
<div class="a" style="left:14px;top:639px;width:2px;height:1px;background:#222"></div>
<div class="t" style="left:2px;top:646px;width:24px;height:12px;font-size:12px;color:#111;text-align:center;transform:rotate(-90deg)">8</div>
<div class="a" style="left:14px;top:664px;width:2px;height:1px;background:#222"></div>
<div class="a" style="left:13px;top:676px;width:4px;height:1px;background:#222"></div>
<div class="a" style="left:14px;top:688px;width:2px;height:1px;background:#222"></div>
<div class="t" style="left:2px;top:695px;width:24px;height:12px;font-size:12px;color:#111;text-align:center;transform:rotate(-90deg)">9</div>
<div class="a" style="left:14px;top:713px;width:2px;height:1px;background:#222"></div>
<div class="a" style="left:13px;top:725px;width:4px;height:1px;background:#222"></div>
<div class="a" style="left:14px;top:738px;width:2px;height:1px;background:#222"></div>
<div class="t" style="left:2px;top:744px;width:24px;height:12px;font-size:12px;color:#111;text-align:center;transform:rotate(-90deg)">10</div>
<div class="a" style="left:14px;top:762px;width:2px;height:1px;background:#222"></div>
<div class="a" style="left:13px;top:775px;width:4px;height:1px;background:#222"></div>
<div class="a" style="left:14px;top:787px;width:2px;height:1px;background:#222"></div>
<div class="t" style="left:2px;top:793px;width:24px;height:12px;font-size:12px;color:#111;text-align:center;transform:rotate(-90deg)">11</div>
<div class="a" style="left:14px;top:812px;width:2px;height:1px;background:#222"></div>
<div class="a" style="left:13px;top:824px;width:4px;height:1px;background:#222"></div>
<div class="a" style="left:14px;top:836px;width:2px;height:1px;background:#222"></div>
<div class="t" style="left:2px;top:842px;width:24px;height:12px;font-size:12px;color:#111;text-align:center;transform:rotate(-90deg)">12</div>
<div class="a" style="left:14px;top:861px;width:2px;height:1px;background:#222"></div>
<div class="a" style="left:13px;top:873px;width:4px;height:1px;background:#222"></div>
<div class="a" style="left:14px;top:885px;width:2px;height:1px;background:#222"></div>
<div class="t" style="left:2px;top:892px;width:24px;height:12px;font-size:12px;color:#111;text-align:center;transform:rotate(-90deg)">13</div>
<div class="a" style="left:14px;top:910px;width:2px;height:1px;background:#222"></div>
<div class="a" style="left:13px;top:922px;width:4px;height:1px;background:#222"></div>
<div class="a" style="left:14px;top:934px;width:2px;height:1px;background:#222"></div>
<div class="t" style="left:2px;top:941px;width:24px;height:12px;font-size:12px;color:#111;text-align:center;transform:rotate(-90deg)">14</div>
<div class="a" style="left:14px;top:959px;width:2px;height:1px;background:#222"></div>
<div class="a" style="left:13px;top:971px;width:4px;height:1px;background:#222"></div>
<div class="a" style="left:14px;top:984px;width:2px;height:1px;background:#222"></div>
<div class="t" style="left:2px;top:990px;width:24px;height:12px;font-size:12px;color:#111;text-align:center;transform:rotate(-90deg)">15</div>
<div class="a" style="left:6px;top:284px;width:17px;height:4px;border-top:1px solid #999;border-bottom:1px solid #999;background:#fff"></div>
<div class="a" style="left:6px;top:507px;width:17px;height:4px;border-top:1px solid #999;border-bottom:1px solid #999;background:#fff"></div>
<div class="a" style="left:6px;top:729px;width:17px;height:4px;border-top:1px solid #999;border-bottom:1px solid #999;background:#fff"></div>
<div class="a" style="left:426px;top:187px;width:1033px;height:813px;background:#fff;border:1px solid #000;border-bottom:none"></div>
<div class="a" style="left:1459px;top:189px;width:2px;height:811px;background:#000"></div>
<div class="a" style="left:525px;top:217px;width:835px;height:1px;background:#c0c0c0"></div>
<div class="a" style="left:525px;top:217px;width:1px;height:783px;background:#c0c0c0"></div>
<div class="a" style="left:1359px;top:217px;width:1px;height:783px;background:#c0c0c0"></div>
<div class="a" style="left:477px;top:259px;width:956px;height:27px;background:#e4e4e4"></div>
<div class="a" style="left:477px;top:259px;width:956px;height:1px;background:#000"></div>
<div class="a" style="left:477px;top:260px;width:956px;height:1px;background:rgba(0,0,0,0.45)"></div>
<div class="a" style="left:477px;top:259px;width:1px;height:27px;background:#000"></div>
<div class="a" style="left:1432px;top:259px;width:1px;height:27px;background:#000"></div>
<div class="a" style="left:477px;top:285px;width:956px;height:668px;background:#cce5fa"></div>
<div class="a" style="left:477px;top:285px;width:956px;height:1px;background:#3399ff"></div>
<div class="a" style="left:477px;top:952px;width:956px;height:1px;background:#3399ff"></div>
<div class="a" style="left:477px;top:285px;width:1px;height:668px;background:#3399ff"></div>
<div class="a" style="left:1432px;top:285px;width:1px;height:668px;background:#3399ff"></div>
<div class="a" style="left:740px;top:259px;width:1px;height:27px;background:#000"></div>
<div class="a" style="left:741px;top:259px;width:1px;height:27px;background:rgba(0,0,0,0.3)"></div>
<div class="a" style="left:740px;top:286px;width:1px;height:665px;background:#0e1c2c"></div>
<div class="a" style="left:741px;top:286px;width:1px;height:665px;background:rgba(14,28,44,0.3)"></div>
<div class="a" style="left:974px;top:259px;width:1px;height:27px;background:#000"></div>
<div class="a" style="left:975px;top:259px;width:1px;height:27px;background:rgba(0,0,0,0.3)"></div>
<div class="a" style="left:974px;top:286px;width:1px;height:665px;background:#0e1c2c"></div>
<div class="a" style="left:975px;top:286px;width:1px;height:665px;background:rgba(14,28,44,0.3)"></div>
<div class="a" style="left:479px;top:508px;width:952px;height:1px;background:#0e1c2c"></div>
<div class="a" style="left:479px;top:509px;width:952px;height:1px;background:rgba(14,28,44,0.45)"></div>
<div class="a" style="left:479px;top:730px;width:952px;height:1px;background:#0e1c2c"></div>
<div class="a" style="left:479px;top:731px;width:952px;height:1px;background:rgba(14,28,44,0.45)"></div>
<div class="a" style="left:525px;top:259px;width:1px;height:694px;background:rgba(90,90,90,0.35)"></div>
<div class="a" style="left:1359px;top:259px;width:1px;height:694px;background:rgba(90,90,90,0.35)"></div>
<svg width="0" height="0" style="position:absolute"><defs><pattern id="wv" width="8" height="3" patternUnits="userSpaceOnUse"><rect x="0" y="0" width="3" height="1" fill="#d8102c"/><rect x="3" y="1" width="1" height="1" fill="#d8102c"/><rect x="4" y="2" width="3" height="1" fill="#d8102c"/><rect x="7" y="1" width="1" height="1" fill="#d8102c"/></pattern><pattern id="wv2" width="6" height="2" patternUnits="userSpaceOnUse"><rect x="0" y="0" width="3" height="1" fill="#f00"/><rect x="3" y="1" width="3" height="1" fill="#f00"/></pattern></defs></svg>
<div class="t" style="left:587px;top:266px;font-size:14px;letter-spacing:1.05px;color:#000;-webkit-text-stroke:0.15px #000"><span class="w">Datum<svg class="wv" style="top:14px"><rect width="100%" height="2" fill="url(#wv2)"/></svg></span></div>
<div class="t" style="left:746px;top:266px;font-size:14px;letter-spacing:1.05px;color:#000;-webkit-text-stroke:0.15px #000"><span class="w">Beschreibung<svg class="wv" style="top:14px"><rect width="100%" height="2" fill="url(#wv2)"/></svg></span></div>
<div class="t" style="left:980px;top:266px;font-size:14px;letter-spacing:1.05px;color:#000;-webkit-text-stroke:0.15px #000"><span class="w">Bemerkung<svg class="wv" style="top:14px"><rect width="100%" height="2" fill="url(#wv2)"/></svg></span></div>
<div class="t" style="left:531px;top:292px;font-size:14px;letter-spacing:0.97px;color:#101828;-webkit-text-stroke:0.15px #101828"><span class="w">Inhalt<svg class="wv" style="top:14px"><rect width="100%" height="3" fill="url(#wv)"/></svg></span> <span class="w">Spalte<svg class="wv" style="top:14px"><rect width="100%" height="3" fill="url(#wv)"/></svg></span> A <span class="w">Zeile<svg class="wv" style="top:14px"><rect width="100%" height="3" fill="url(#wv)"/></svg></span> 2</div>
<div class="t" style="left:484px;top:309px;font-family:'Liberation Serif',serif;font-style:italic;font-size:19px;letter-spacing:0.05px;color:#0f1a30;-webkit-text-stroke:0.12px #0f1a30"><span class="w">Inhalt<svg class="wv" style="top:18px"><rect width="100%" height="3" fill="url(#wv)"/></svg></span> <span class="w">Spalte<svg class="wv" style="top:18px"><rect width="100%" height="3" fill="url(#wv)"/></svg></span> B <span class="w">Zeile<svg class="wv" style="top:18px"><rect width="100%" height="3" fill="url(#wv)"/></svg></span> 2</div>
<div class="t" style="left:484px;top:332px;font-family:'Liberation Serif',serif;font-style:italic;font-size:19px;letter-spacing:0.05px;color:#0f1a30;-webkit-text-stroke:0.12px #0f1a30"><span class="w">Inhalt<svg class="wv" style="top:18px"><rect width="100%" height="3" fill="url(#wv)"/></svg></span> <span class="w">Spalte<svg class="wv" style="top:18px"><rect width="100%" height="3" fill="url(#wv)"/></svg></span> B <span class="w">Zeile<svg class="wv" style="top:18px"><rect width="100%" height="3" fill="url(#wv)"/></svg></span> 2</div>
<div class="t" style="left:484px;top:354px;font-family:'Liberation Serif',serif;font-style:italic;font-size:19px;letter-spacing:0.05px;color:#0f1a30;-webkit-text-stroke:0.12px #0f1a30"><span class="w">Inhalt<svg class="wv" style="top:18px"><rect width="100%" height="3" fill="url(#wv)"/></svg></span> <span class="w">Spalte<svg class="wv" style="top:18px"><rect width="100%" height="3" fill="url(#wv)"/></svg></span> A <span class="w">Zeile<svg class="wv" style="top:18px"><rect width="100%" height="3" fill="url(#wv)"/></svg></span> 3</div>
<div class="t" style="left:484px;top:376px;font-family:'Liberation Serif',serif;font-style:italic;font-size:19px;letter-spacing:0.05px;color:#0f1a30;-webkit-text-stroke:0.12px #0f1a30"><span class="w">Inhalt<svg class="wv" style="top:18px"><rect width="100%" height="3" fill="url(#wv)"/></svg></span> <span class="w">Spalte<svg class="wv" style="top:18px"><rect width="100%" height="3" fill="url(#wv)"/></svg></span> B <span class="w">Zeile<svg class="wv" style="top:18px"><rect width="100%" height="3" fill="url(#wv)"/></svg></span> 3</div>
<div class="t" style="left:484px;top:399px;font-family:'Liberation Serif',serif;font-style:italic;font-size:19px;letter-spacing:0.05px;color:#0f1a30;-webkit-text-stroke:0.12px #0f1a30"><span class="w">Inhalt<svg class="wv" style="top:18px"><rect width="100%" height="3" fill="url(#wv)"/></svg></span> <span class="w">Spalte<svg class="wv" style="top:18px"><rect width="100%" height="3" fill="url(#wv)"/></svg></span> B <span class="w">Zeile<svg class="wv" style="top:18px"><rect width="100%" height="3" fill="url(#wv)"/></svg></span> 3</div>
<div class="t" style="left:484px;top:421px;font-family:'Liberation Serif',serif;font-style:italic;font-size:19px;letter-spacing:0.05px;color:#0f1a30;-webkit-text-stroke:0.12px #0f1a30"><span class="w">Inhalt<svg class="wv" style="top:18px"><rect width="100%" height="3" fill="url(#wv)"/></svg></span> <span class="w">Spalte<svg class="wv" style="top:18px"><rect width="100%" height="3" fill="url(#wv)"/></svg></span> A <span class="w">Zeile<svg class="wv" style="top:18px"><rect width="100%" height="3" fill="url(#wv)"/></svg></span> 4</div>
<div class="t" style="left:484px;top:443px;font-family:'Liberation Serif',serif;font-style:italic;font-size:19px;letter-spacing:0.05px;color:#0f1a30;-webkit-text-stroke:0.12px #0f1a30"><span class="w">Inhalt<svg class="wv" style="top:18px"><rect width="100%" height="3" fill="url(#wv)"/></svg></span> <span class="w">Spalte<svg class="wv" style="top:18px"><rect width="100%" height="3" fill="url(#wv)"/></svg></span> B <span class="w">Zeile<svg class="wv" style="top:18px"><rect width="100%" height="3" fill="url(#wv)"/></svg></span> 4</div>
<div class="t" style="left:484px;top:466px;font-family:'Liberation Serif',serif;font-style:italic;font-size:19px;letter-spacing:0.05px;color:#0f1a30;-webkit-text-stroke:0.12px #0f1a30"><span class="w">Inhalt<svg class="wv" style="top:18px"><rect width="100%" height="3" fill="url(#wv)"/></svg></span> <span class="w">Spalte<svg class="wv" style="top:18px"><rect width="100%" height="3" fill="url(#wv)"/></svg></span> B <span class="w">Zeile<svg class="wv" style="top:18px"><rect width="100%" height="3" fill="url(#wv)"/></svg></span> 4</div>
<div class="t" style="left:746px;top:292px;font-size:14px;letter-spacing:0.97px;color:#101828;-webkit-text-stroke:0.15px #101828"><span class="w">Inhalt<svg class="wv" style="top:14px"><rect width="100%" height="3" fill="url(#wv)"/></svg></span> <span class="w">Spalte<svg class="wv" style="top:14px"><rect width="100%" height="3" fill="url(#wv)"/></svg></span> A <span class="w">Zeile<svg class="wv" style="top:14px"><rect width="100%" height="3" fill="url(#wv)"/></svg></span> 2</div>
<div class="t" style="left:746px;top:309px;font-family:'Liberation Serif',serif;font-style:italic;font-size:19px;letter-spacing:0.05px;color:#0f1a30;-webkit-text-stroke:0.12px #0f1a30"><span class="w">Inhalt<svg class="wv" style="top:18px"><rect width="100%" height="3" fill="url(#wv)"/></svg></span> <span class="w">Spalte<svg class="wv" style="top:18px"><rect width="100%" height="3" fill="url(#wv)"/></svg></span> B <span class="w">Zeile<svg class="wv" style="top:18px"><rect width="100%" height="3" fill="url(#wv)"/></svg></span> 2</div>
<div class="t" style="left:746px;top:332px;font-family:'Liberation Serif',serif;font-style:italic;font-size:19px;letter-spacing:0.05px;color:#0f1a30;-webkit-text-stroke:0.12px #0f1a30"><span class="w">Inhalt<svg class="wv" style="top:18px"><rect width="100%" height="3" fill="url(#wv)"/></svg></span> <span class="w">Spalte<svg class="wv" style="top:18px"><rect width="100%" height="3" fill="url(#wv)"/></svg></span> B <span class="w">Zeile<svg class="wv" style="top:18px"><rect width="100%" height="3" fill="url(#wv)"/></svg></span> 2</div>
<div class="t" style="left:746px;top:354px;font-family:'Liberation Serif',serif;font-style:italic;font-size:19px;letter-spacing:0.05px;color:#0f1a30;-webkit-text-stroke:0.12px #0f1a30"><span class="w">Inhalt<svg class="wv" style="top:18px"><rect width="100%" height="3" fill="url(#wv)"/></svg></span> <span class="w">Spalte<svg class="wv" style="top:18px"><rect width="100%" height="3" fill="url(#wv)"/></svg></span> A <span class="w">Zeile<svg class="wv" style="top:18px"><rect width="100%" height="3" fill="url(#wv)"/></svg></span> 3</div>
<div class="t" style="left:746px;top:376px;font-family:'Liberation Serif',serif;font-style:italic;font-size:19px;letter-spacing:0.05px;color:#0f1a30;-webkit-text-stroke:0.12px #0f1a30"><span class="w">Inhalt<svg class="wv" style="top:18px"><rect width="100%" height="3" fill="url(#wv)"/></svg></span> <span class="w">Spalte<svg class="wv" style="top:18px"><rect width="100%" height="3" fill="url(#wv)"/></svg></span> B <span class="w">Zeile<svg class="wv" style="top:18px"><rect width="100%" height="3" fill="url(#wv)"/></svg></span> 3</div>
<div class="t" style="left:746px;top:399px;font-family:'Liberation Serif',serif;font-style:italic;font-size:19px;letter-spacing:0.05px;color:#0f1a30;-webkit-text-stroke:0.12px #0f1a30"><span class="w">Inhalt<svg class="wv" style="top:18px"><rect width="100%" height="3" fill="url(#wv)"/></svg></span> <span class="w">Spalte<svg class="wv" style="top:18px"><rect width="100%" height="3" fill="url(#wv)"/></svg></span> B <span class="w">Zeile<svg class="wv" style="top:18px"><rect width="100%" height="3" fill="url(#wv)"/></svg></span> 3</div>
<div class="t" style="left:746px;top:421px;font-family:'Liberation Serif',serif;font-style:italic;font-size:19px;letter-spacing:0.05px;color:#0f1a30;-webkit-text-stroke:0.12px #0f1a30"><span class="w">Inhalt<svg class="wv" style="top:18px"><rect width="100%" height="3" fill="url(#wv)"/></svg></span> <span class="w">Spalte<svg class="wv" style="top:18px"><rect width="100%" height="3" fill="url(#wv)"/></svg></span> A <span class="w">Zeile<svg class="wv" style="top:18px"><rect width="100%" height="3" fill="url(#wv)"/></svg></span> 4</div>
<div class="t" style="left:746px;top:443px;font-family:'Liberation Serif',serif;font-style:italic;font-size:19px;letter-spacing:0.05px;color:#0f1a30;-webkit-text-stroke:0.12px #0f1a30"><span class="w">Inhalt<svg class="wv" style="top:18px"><rect width="100%" height="3" fill="url(#wv)"/></svg></span> <span class="w">Spalte<svg class="wv" style="top:18px"><rect width="100%" height="3" fill="url(#wv)"/></svg></span> B <span class="w">Zeile<svg class="wv" style="top:18px"><rect width="100%" height="3" fill="url(#wv)"/></svg></span> 4</div>
<div class="t" style="left:746px;top:466px;font-family:'Liberation Serif',serif;font-style:italic;font-size:19px;letter-spacing:0.05px;color:#0f1a30;-webkit-text-stroke:0.12px #0f1a30"><span class="w">Inhalt<svg class="wv" style="top:18px"><rect width="100%" height="3" fill="url(#wv)"/></svg></span> <span class="w">Spalte<svg class="wv" style="top:18px"><rect width="100%" height="3" fill="url(#wv)"/></svg></span> B <span class="w">Zeile<svg class="wv" style="top:18px"><rect width="100%" height="3" fill="url(#wv)"/></svg></span> 4</div>
<div class="t" style="left:980px;top:292px;font-size:14px;letter-spacing:0.97px;color:#101828;-webkit-text-stroke:0.15px #101828"><span class="w">Inhalt<svg class="wv" style="top:14px"><rect width="100%" height="3" fill="url(#wv)"/></svg></span> <span class="w">Spalte<svg class="wv" style="top:14px"><rect width="100%" height="3" fill="url(#wv)"/></svg></span> A <span class="w">Zeile<svg class="wv" style="top:14px"><rect width="100%" height="3" fill="url(#wv)"/></svg></span> 2</div>
<div class="t" style="left:980px;top:309px;font-family:'Liberation Serif',serif;font-style:italic;font-size:19px;letter-spacing:0.05px;color:#0f1a30;-webkit-text-stroke:0.12px #0f1a30"><span class="w">Inhalt<svg class="wv" style="top:18px"><rect width="100%" height="3" fill="url(#wv)"/></svg></span> <span class="w">Spalte<svg class="wv" style="top:18px"><rect width="100%" height="3" fill="url(#wv)"/></svg></span> B <span class="w">Zeile<svg class="wv" style="top:18px"><rect width="100%" height="3" fill="url(#wv)"/></svg></span> 2</div>
<div class="t" style="left:980px;top:332px;font-family:'Liberation Serif',serif;font-style:italic;font-size:19px;letter-spacing:0.05px;color:#0f1a30;-webkit-text-stroke:0.12px #0f1a30"><span class="w">Inhalt<svg class="wv" style="top:18px"><rect width="100%" height="3" fill="url(#wv)"/></svg></span> <span class="w">Spalte<svg class="wv" style="top:18px"><rect width="100%" height="3" fill="url(#wv)"/></svg></span> B <span class="w">Zeile<svg class="wv" style="top:18px"><rect width="100%" height="3" fill="url(#wv)"/></svg></span> 2</div>
<div class="t" style="left:980px;top:354px;font-family:'Liberation Serif',serif;font-style:italic;font-size:19px;letter-spacing:0.05px;color:#0f1a30;-webkit-text-stroke:0.12px #0f1a30"><span class="w">Inhalt<svg class="wv" style="top:18px"><rect width="100%" height="3" fill="url(#wv)"/></svg></span> <span class="w">Spalte<svg class="wv" style="top:18px"><rect width="100%" height="3" fill="url(#wv)"/></svg></span> A <span class="w">Zeile<svg class="wv" style="top:18px"><rect width="100%" height="3" fill="url(#wv)"/></svg></span> 3</div>
<div class="t" style="left:980px;top:376px;font-family:'Liberation Serif',serif;font-style:italic;font-size:19px;letter-spacing:0.05px;color:#0f1a30;-webkit-text-stroke:0.12px #0f1a30"><span class="w">Inhalt<svg class="wv" style="top:18px"><rect width="100%" height="3" fill="url(#wv)"/></svg></span> <span class="w">Spalte<svg class="wv" style="top:18px"><rect width="100%" height="3" fill="url(#wv)"/></svg></span> B <span class="w">Zeile<svg class="wv" style="top:18px"><rect width="100%" height="3" fill="url(#wv)"/></svg></span> 3</div>
<div class="t" style="left:980px;top:399px;font-family:'Liberation Serif',serif;font-style:italic;font-size:19px;letter-spacing:0.05px;color:#0f1a30;-webkit-text-stroke:0.12px #0f1a30"><span class="w">Inhalt<svg class="wv" style="top:18px"><rect width="100%" height="3" fill="url(#wv)"/></svg></span> <span class="w">Spalte<svg class="wv" style="top:18px"><rect width="100%" height="3" fill="url(#wv)"/></svg></span> B <span class="w">Zeile<svg class="wv" style="top:18px"><rect width="100%" height="3" fill="url(#wv)"/></svg></span> 3</div>
<div class="t" style="left:980px;top:421px;font-family:'Liberation Serif',serif;font-style:italic;font-size:19px;letter-spacing:0.05px;color:#0f1a30;-webkit-text-stroke:0.12px #0f1a30"><span class="w">Inhalt<svg class="wv" style="top:18px"><rect width="100%" height="3" fill="url(#wv)"/></svg></span> <span class="w">Spalte<svg class="wv" style="top:18px"><rect width="100%" height="3" fill="url(#wv)"/></svg></span> A <span class="w">Zeile<svg class="wv" style="top:18px"><rect width="100%" height="3" fill="url(#wv)"/></svg></span> 4</div>
<div class="t" style="left:980px;top:443px;font-family:'Liberation Serif',serif;font-style:italic;font-size:19px;letter-spacing:0.05px;color:#0f1a30;-webkit-text-stroke:0.12px #0f1a30"><span class="w">Inhalt<svg class="wv" style="top:18px"><rect width="100%" height="3" fill="url(#wv)"/></svg></span> <span class="w">Spalte<svg class="wv" style="top:18px"><rect width="100%" height="3" fill="url(#wv)"/></svg></span> B <span class="w">Zeile<svg class="wv" style="top:18px"><rect width="100%" height="3" fill="url(#wv)"/></svg></span> 4</div>
<div class="t" style="left:980px;top:466px;font-family:'Liberation Serif',serif;font-style:italic;font-size:19px;letter-spacing:0.05px;color:#0f1a30;-webkit-text-stroke:0.12px #0f1a30"><span class="w">Inhalt<svg class="wv" style="top:18px"><rect width="100%" height="3" fill="url(#wv)"/></svg></span> <span class="w">Spalte<svg class="wv" style="top:18px"><rect width="100%" height="3" fill="url(#wv)"/></svg></span> B <span class="w">Zeile<svg class="wv" style="top:18px"><rect width="100%" height="3" fill="url(#wv)"/></svg></span> 4</div>
<div class="t" style="left:531px;top:514px;font-size:14px;letter-spacing:0.97px;color:#101828;-webkit-text-stroke:0.15px #101828"><span class="w">Inhalt<svg class="wv" style="top:14px"><rect width="100%" height="3" fill="url(#wv)"/></svg></span> <span class="w">Spalte<svg class="wv" style="top:14px"><rect width="100%" height="3" fill="url(#wv)"/></svg></span> A <span class="w">Zeile<svg class="wv" style="top:14px"><rect width="100%" height="3" fill="url(#wv)"/></svg></span> 2</div>
<div class="t" style="left:484px;top:532px;font-family:'Liberation Serif',serif;font-style:italic;font-size:19px;letter-spacing:0.05px;color:#0f1a30;-webkit-text-stroke:0.12px #0f1a30"><span class="w">Inhalt<svg class="wv" style="top:18px"><rect width="100%" height="3" fill="url(#wv)"/></svg></span> <span class="w">Spalte<svg class="wv" style="top:18px"><rect width="100%" height="3" fill="url(#wv)"/></svg></span> B <span class="w">Zeile<svg class="wv" style="top:18px"><rect width="100%" height="3" fill="url(#wv)"/></svg></span> 2</div>
<div class="t" style="left:484px;top:554px;font-family:'Liberation Serif',serif;font-style:italic;font-size:19px;letter-spacing:0.05px;color:#0f1a30;-webkit-text-stroke:0.12px #0f1a30"><span class="w">Inhalt<svg class="wv" style="top:18px"><rect width="100%" height="3" fill="url(#wv)"/></svg></span> <span class="w">Spalte<svg class="wv" style="top:18px"><rect width="100%" height="3" fill="url(#wv)"/></svg></span> B <span class="w">Zeile<svg class="wv" style="top:18px"><rect width="100%" height="3" fill="url(#wv)"/></svg></span> 2</div>
<div class="t" style="left:484px;top:576px;font-family:'Liberation Serif',serif;font-style:italic;font-size:19px;letter-spacing:0.05px;color:#0f1a30;-webkit-text-stroke:0.12px #0f1a30"><span class="w">Inhalt<svg class="wv" style="top:18px"><rect width="100%" height="3" fill="url(#wv)"/></svg></span> <span class="w">Spalte<svg class="wv" style="top:18px"><rect width="100%" height="3" fill="url(#wv)"/></svg></span> A <span class="w">Zeile<svg class="wv" style="top:18px"><rect width="100%" height="3" fill="url(#wv)"/></svg></span> 3</div>
<div class="t" style="left:484px;top:599px;font-family:'Liberation Serif',serif;font-style:italic;font-size:19px;letter-spacing:0.05px;color:#0f1a30;-webkit-text-stroke:0.12px #0f1a30"><span class="w">Inhalt<svg class="wv" style="top:18px"><rect width="100%" height="3" fill="url(#wv)"/></svg></span> <span class="w">Spalte<svg class="wv" style="top:18px"><rect width="100%" height="3" fill="url(#wv)"/></svg></span> B <span class="w">Zeile<svg class="wv" style="top:18px"><rect width="100%" height="3" fill="url(#wv)"/></svg></span> 3</div>
<div class="t" style="left:484px;top:621px;font-family:'Liberation Serif',serif;font-style:italic;font-size:19px;letter-spacing:0.05px;color:#0f1a30;-webkit-text-stroke:0.12px #0f1a30"><span class="w">Inhalt<svg class="wv" style="top:18px"><rect width="100%" height="3" fill="url(#wv)"/></svg></span> <span class="w">Spalte<svg class="wv" style="top:18px"><rect width="100%" height="3" fill="url(#wv)"/></svg></span> B <span class="w">Zeile<svg class="wv" style="top:18px"><rect width="100%" height="3" fill="url(#wv)"/></svg></span> 3</div>
<div class="t" style="left:484px;top:644px;font-family:'Liberation Serif',serif;font-style:italic;font-size:19px;letter-spacing:0.05px;color:#0f1a30;-webkit-text-stroke:0.12px #0f1a30"><span class="w">Inhalt<svg class="wv" style="top:18px"><rect width="100%" height="3" fill="url(#wv)"/></svg></span> <span class="w">Spalte<svg class="wv" style="top:18px"><rect width="100%" height="3" fill="url(#wv)"/></svg></span> A <span class="w">Zeile<svg class="wv" style="top:18px"><rect width="100%" height="3" fill="url(#wv)"/></svg></span> 4</div>
<div class="t" style="left:484px;top:666px;font-family:'Liberation Serif',serif;font-style:italic;font-size:19px;letter-spacing:0.05px;color:#0f1a30;-webkit-text-stroke:0.12px #0f1a30"><span class="w">Inhalt<svg class="wv" style="top:18px"><rect width="100%" height="3" fill="url(#wv)"/></svg></span> <span class="w">Spalte<svg class="wv" style="top:18px"><rect width="100%" height="3" fill="url(#wv)"/></svg></span> B <span class="w">Zeile<svg class="wv" style="top:18px"><rect width="100%" height="3" fill="url(#wv)"/></svg></span> 4</div>
<div class="t" style="left:484px;top:688px;font-family:'Liberation Serif',serif;font-style:italic;font-size:19px;letter-spacing:0.05px;color:#0f1a30;-webkit-text-stroke:0.12px #0f1a30"><span class="w">Inhalt<svg class="wv" style="top:18px"><rect width="100%" height="3" fill="url(#wv)"/></svg></span> <span class="w">Spalte<svg class="wv" style="top:18px"><rect width="100%" height="3" fill="url(#wv)"/></svg></span> B <span class="w">Zeile<svg class="wv" style="top:18px"><rect width="100%" height="3" fill="url(#wv)"/></svg></span> 4</div>
<div class="t" style="left:746px;top:514px;font-size:14px;letter-spacing:0.97px;color:#101828;-webkit-text-stroke:0.15px #101828"><span class="w">Inhalt<svg class="wv" style="top:14px"><rect width="100%" height="3" fill="url(#wv)"/></svg></span> <span class="w">Spalte<svg class="wv" style="top:14px"><rect width="100%" height="3" fill="url(#wv)"/></svg></span> A <span class="w">Zeile<svg class="wv" style="top:14px"><rect width="100%" height="3" fill="url(#wv)"/></svg></span> 2</div>
<div class="t" style="left:746px;top:532px;font-family:'Liberation Serif',serif;font-style:italic;font-size:19px;letter-spacing:0.05px;color:#0f1a30;-webkit-text-stroke:0.12px #0f1a30"><span class="w">Inhalt<svg class="wv" style="top:18px"><rect width="100%" height="3" fill="url(#wv)"/></svg></span> <span class="w">Spalte<svg class="wv" style="top:18px"><rect width="100%" height="3" fill="url(#wv)"/></svg></span> B <span class="w">Zeile<svg class="wv" style="top:18px"><rect width="100%" height="3" fill="url(#wv)"/></svg></span> 2</div>
<div class="t" style="left:746px;top:554px;font-family:'Liberation Serif',serif;font-style:italic;font-size:19px;letter-spacing:0.05px;color:#0f1a30;-webkit-text-stroke:0.12px #0f1a30"><span class="w">Inhalt<svg class="wv" style="top:18px"><rect width="100%" height="3" fill="url(#wv)"/></svg></span> <span class="w">Spalte<svg class="wv" style="top:18px"><rect width="100%" height="3" fill="url(#wv)"/></svg></span> B <span class="w">Zeile<svg class="wv" style="top:18px"><rect width="100%" height="3" fill="url(#wv)"/></svg></span> 2</div>
<div class="t" style="left:746px;top:576px;font-family:'Liberation Serif',serif;font-style:italic;font-size:19px;letter-spacing:0.05px;color:#0f1a30;-webkit-text-stroke:0.12px #0f1a30"><span class="w">Inhalt<svg class="wv" style="top:18px"><rect width="100%" height="3" fill="url(#wv)"/></svg></span> <span class="w">Spalte<svg class="wv" style="top:18px"><rect width="100%" height="3" fill="url(#wv)"/></svg></span> A <span class="w">Zeile<svg class="wv" style="top:18px"><rect width="100%" height="3" fill="url(#wv)"/></svg></span> 3</div>
<div class="t" style="left:746px;top:599px;font-family:'Liberation Serif',serif;font-style:italic;font-size:19px;letter-spacing:0.05px;color:#0f1a30;-webkit-text-stroke:0.12px #0f1a30"><span class="w">Inhalt<svg class="wv" style="top:18px"><rect width="100%" height="3" fill="url(#wv)"/></svg></span> <span class="w">Spalte<svg class="wv" style="top:18px"><rect width="100%" height="3" fill="url(#wv)"/></svg></span> B <span class="w">Zeile<svg class="wv" style="top:18px"><rect width="100%" height="3" fill="url(#wv)"/></svg></span> 3</div>
<div class="t" style="left:746px;top:621px;font-family:'Liberation Serif',serif;font-style:italic;font-size:19px;letter-spacing:0.05px;color:#0f1a30;-webkit-text-stroke:0.12px #0f1a30"><span class="w">Inhalt<svg class="wv" style="top:18px"><rect width="100%" height="3" fill="url(#wv)"/></svg></span> <span class="w">Spalte<svg class="wv" style="top:18px"><rect width="100%" height="3" fill="url(#wv)"/></svg></span> B <span class="w">Zeile<svg class="wv" style="top:18px"><rect width="100%" height="3" fill="url(#wv)"/></svg></span> 3</div>
<div class="t" style="left:746px;top:644px;font-family:'Liberation Serif',serif;font-style:italic;font-size:19px;letter-spacing:0.05px;color:#0f1a30;-webkit-text-stroke:0.12px #0f1a30"><span class="w">Inhalt<svg class="wv" style="top:18px"><rect width="100%" height="3" fill="url(#wv)"/></svg></span> <span class="w">Spalte<svg class="wv" style="top:18px"><rect width="100%" height="3" fill="url(#wv)"/></svg></span> A <span class="w">Zeile<svg class="wv" style="top:18px"><rect width="100%" height="3" fill="url(#wv)"/></svg></span> 4</div>
<div class="t" style="left:746px;top:666px;font-family:'Liberation Serif',serif;font-style:italic;font-size:19px;letter-spacing:0.05px;color:#0f1a30;-webkit-text-stroke:0.12px #0f1a30"><span class="w">Inhalt<svg class="wv" style="top:18px"><rect width="100%" height="3" fill="url(#wv)"/></svg></span> <span class="w">Spalte<svg class="wv" style="top:18px"><rect width="100%" height="3" fill="url(#wv)"/></svg></span> B <span class="w">Zeile<svg class="wv" style="top:18px"><rect width="100%" height="3" fill="url(#wv)"/></svg></span> 4</div>
<div class="t" style="left:746px;top:688px;font-family:'Liberation Serif',serif;font-style:italic;font-size:19px;letter-spacing:0.05px;color:#0f1a30;-webkit-text-stroke:0.12px #0f1a30"><span class="w">Inhalt<svg class="wv" style="top:18px"><rect width="100%" height="3" fill="url(#wv)"/></svg></span> <span class="w">Spalte<svg class="wv" style="top:18px"><rect width="100%" height="3" fill="url(#wv)"/></svg></span> B <span class="w">Zeile<svg class="wv" style="top:18px"><rect width="100%" height="3" fill="url(#wv)"/></svg></span> 4</div>
<div class="t" style="left:980px;top:514px;font-size:14px;letter-spacing:0.97px;color:#101828;-webkit-text-stroke:0.15px #101828"><span class="w">Inhalt<svg class="wv" style="top:14px"><rect width="100%" height="3" fill="url(#wv)"/></svg></span> <span class="w">Spalte<svg class="wv" style="top:14px"><rect width="100%" height="3" fill="url(#wv)"/></svg></span> A <span class="w">Zeile<svg class="wv" style="top:14px"><rect width="100%" height="3" fill="url(#wv)"/></svg></span> 2</div>
<div class="t" style="left:980px;top:532px;font-family:'Liberation Serif',serif;font-style:italic;font-size:19px;letter-spacing:0.05px;color:#0f1a30;-webkit-text-stroke:0.12px #0f1a30"><span class="w">Inhalt<svg class="wv" style="top:18px"><rect width="100%" height="3" fill="url(#wv)"/></svg></span> <span class="w">Spalte<svg class="wv" style="top:18px"><rect width="100%" height="3" fill="url(#wv)"/></svg></span> B <span class="w">Zeile<svg class="wv" style="top:18px"><rect width="100%" height="3" fill="url(#wv)"/></svg></span> 2</div>
<div class="t" style="left:980px;top:554px;font-family:'Liberation Serif',serif;font-style:italic;font-size:19px;letter-spacing:0.05px;color:#0f1a30;-webkit-text-stroke:0.12px #0f1a30"><span class="w">Inhalt<svg class="wv" style="top:18px"><rect width="100%" height="3" fill="url(#wv)"/></svg></span> <span class="w">Spalte<svg class="wv" style="top:18px"><rect width="100%" height="3" fill="url(#wv)"/></svg></span> B <span class="w">Zeile<svg class="wv" style="top:18px"><rect width="100%" height="3" fill="url(#wv)"/></svg></span> 2</div>
<div class="t" style="left:980px;top:576px;font-family:'Liberation Serif',serif;font-style:italic;font-size:19px;letter-spacing:0.05px;color:#0f1a30;-webkit-text-stroke:0.12px #0f1a30"><span class="w">Inhalt<svg class="wv" style="top:18px"><rect width="100%" height="3" fill="url(#wv)"/></svg></span> <span class="w">Spalte<svg class="wv" style="top:18px"><rect width="100%" height="3" fill="url(#wv)"/></svg></span> A <span class="w">Zeile<svg class="wv" style="top:18px"><rect width="100%" height="3" fill="url(#wv)"/></svg></span> 3</div>
<div class="t" style="left:980px;top:599px;font-family:'Liberation Serif',serif;font-style:italic;font-size:19px;letter-spacing:0.05px;color:#0f1a30;-webkit-text-stroke:0.12px #0f1a30"><span class="w">Inhalt<svg class="wv" style="top:18px"><rect width="100%" height="3" fill="url(#wv)"/></svg></span> <span class="w">Spalte<svg class="wv" style="top:18px"><rect width="100%" height="3" fill="url(#wv)"/></svg></span> B <span class="w">Zeile<svg class="wv" style="top:18px"><rect width="100%" height="3" fill="url(#wv)"/></svg></span> 3</div>
<div class="t" style="left:980px;top:621px;font-family:'Liberation Serif',serif;font-style:italic;font-size:19px;letter-spacing:0.05px;color:#0f1a30;-webkit-text-stroke:0.12px #0f1a30"><span class="w">Inhalt<svg class="wv" style="top:18px"><rect width="100%" height="3" fill="url(#wv)"/></svg></span> <span class="w">Spalte<svg class="wv" style="top:18px"><rect width="100%" height="3" fill="url(#wv)"/></svg></span> B <span class="w">Zeile<svg class="wv" style="top:18px"><rect width="100%" height="3" fill="url(#wv)"/></svg></span> 3</div>
<div class="t" style="left:980px;top:644px;font-family:'Liberation Serif',serif;font-style:italic;font-size:19px;letter-spacing:0.05px;color:#0f1a30;-webkit-text-stroke:0.12px #0f1a30"><span class="w">Inhalt<svg class="wv" style="top:18px"><rect width="100%" height="3" fill="url(#wv)"/></svg></span> <span class="w">Spalte<svg class="wv" style="top:18px"><rect width="100%" height="3" fill="url(#wv)"/></svg></span> A <span class="w">Zeile<svg class="wv" style="top:18px"><rect width="100%" height="3" fill="url(#wv)"/></svg></span> 4</div>
<div class="t" style="left:980px;top:666px;font-family:'Liberation Serif',serif;font-style:italic;font-size:19px;letter-spacing:0.05px;color:#0f1a30;-webkit-text-stroke:0.12px #0f1a30"><span class="w">Inhalt<svg class="wv" style="top:18px"><rect width="100%" height="3" fill="url(#wv)"/></svg></span> <span class="w">Spalte<svg class="wv" style="top:18px"><rect width="100%" height="3" fill="url(#wv)"/></svg></span> B <span class="w">Zeile<svg class="wv" style="top:18px"><rect width="100%" height="3" fill="url(#wv)"/></svg></span> 4</div>
<div class="t" style="left:980px;top:688px;font-family:'Liberation Serif',serif;font-style:italic;font-size:19px;letter-spacing:0.05px;color:#0f1a30;-webkit-text-stroke:0.12px #0f1a30"><span class="w">Inhalt<svg class="wv" style="top:18px"><rect width="100%" height="3" fill="url(#wv)"/></svg></span> <span class="w">Spalte<svg class="wv" style="top:18px"><rect width="100%" height="3" fill="url(#wv)"/></svg></span> B <span class="w">Zeile<svg class="wv" style="top:18px"><rect width="100%" height="3" fill="url(#wv)"/></svg></span> 4</div>
<div class="t" style="left:531px;top:737px;font-size:14px;letter-spacing:0.97px;color:#101828;-webkit-text-stroke:0.15px #101828"><span class="w">Inhalt<svg class="wv" style="top:14px"><rect width="100%" height="3" fill="url(#wv)"/></svg></span> <span class="w">Spalte<svg class="wv" style="top:14px"><rect width="100%" height="3" fill="url(#wv)"/></svg></span> A <span class="w">Zeile<svg class="wv" style="top:14px"><rect width="100%" height="3" fill="url(#wv)"/></svg></span> 2</div>
<div class="t" style="left:484px;top:754px;font-family:'Liberation Serif',serif;font-style:italic;font-size:19px;letter-spacing:0.05px;color:#0f1a30;-webkit-text-stroke:0.12px #0f1a30"><span class="w">Inhalt<svg class="wv" style="top:18px"><rect width="100%" height="3" fill="url(#wv)"/></svg></span> <span class="w">Spalte<svg class="wv" style="top:18px"><rect width="100%" height="3" fill="url(#wv)"/></svg></span> B <span class="w">Zeile<svg class="wv" style="top:18px"><rect width="100%" height="3" fill="url(#wv)"/></svg></span> 2</div>
<div class="t" style="left:484px;top:776px;font-family:'Liberation Serif',serif;font-style:italic;font-size:19px;letter-spacing:0.05px;color:#0f1a30;-webkit-text-stroke:0.12px #0f1a30"><span class="w">Inhalt<svg class="wv" style="top:18px"><rect width="100%" height="3" fill="url(#wv)"/></svg></span> <span class="w">Spalte<svg class="wv" style="top:18px"><rect width="100%" height="3" fill="url(#wv)"/></svg></span> B <span class="w">Zeile<svg class="wv" style="top:18px"><rect width="100%" height="3" fill="url(#wv)"/></svg></span> 2</div>
<div class="t" style="left:484px;top:798px;font-family:'Liberation Serif',serif;font-style:italic;font-size:19px;letter-spacing:0.05px;color:#0f1a30;-webkit-text-stroke:0.12px #0f1a30"><span class="w">Inhalt<svg class="wv" style="top:18px"><rect width="100%" height="3" fill="url(#wv)"/></svg></span> <span class="w">Spalte<svg class="wv" style="top:18px"><rect width="100%" height="3" fill="url(#wv)"/></svg></span> A <span class="w">Zeile<svg class="wv" style="top:18px"><rect width="100%" height="3" fill="url(#wv)"/></svg></span> 3</div>
<div class="t" style="left:484px;top:821px;font-family:'Liberation Serif',serif;font-style:italic;font-size:19px;letter-spacing:0.05px;color:#0f1a30;-webkit-text-stroke:0.12px #0f1a30"><span class="w">Inhalt<svg class="wv" style="top:18px"><rect width="100%" height="3" fill="url(#wv)"/></svg></span> <span class="w">Spalte<svg class="wv" style="top:18px"><rect width="100%" height="3" fill="url(#wv)"/></svg></span> B <span class="w">Zeile<svg class="wv" style="top:18px"><rect width="100%" height="3" fill="url(#wv)"/></svg></span> 3</div>
<div class="t" style="left:484px;top:843px;font-family:'Liberation Serif',serif;font-style:italic;font-size:19px;letter-spacing:0.05px;color:#0f1a30;-webkit-text-stroke:0.12px #0f1a30"><span class="w">Inhalt<svg class="wv" style="top:18px"><rect width="100%" height="3" fill="url(#wv)"/></svg></span> <span class="w">Spalte<svg class="wv" style="top:18px"><rect width="100%" height="3" fill="url(#wv)"/></svg></span> B <span class="w">Zeile<svg class="wv" style="top:18px"><rect width="100%" height="3" fill="url(#wv)"/></svg></span> 3</div>
<div class="t" style="left:484px;top:866px;font-family:'Liberation Serif',serif;font-style:italic;font-size:19px;letter-spacing:0.05px;color:#0f1a30;-webkit-text-stroke:0.12px #0f1a30"><span class="w">Inhalt<svg class="wv" style="top:18px"><rect width="100%" height="3" fill="url(#wv)"/></svg></span> <span class="w">Spalte<svg class="wv" style="top:18px"><rect width="100%" height="3" fill="url(#wv)"/></svg></span> A <span class="w">Zeile<svg class="wv" style="top:18px"><rect width="100%" height="3" fill="url(#wv)"/></svg></span> 4</div>
<div class="t" style="left:484px;top:888px;font-family:'Liberation Serif',serif;font-style:italic;font-size:19px;letter-spacing:0.05px;color:#0f1a30;-webkit-text-stroke:0.12px #0f1a30"><span class="w">Inhalt<svg class="wv" style="top:18px"><rect width="100%" height="3" fill="url(#wv)"/></svg></span> <span class="w">Spalte<svg class="wv" style="top:18px"><rect width="100%" height="3" fill="url(#wv)"/></svg></span> B <span class="w">Zeile<svg class="wv" style="top:18px"><rect width="100%" height="3" fill="url(#wv)"/></svg></span> 4</div>
<div class="t" style="left:484px;top:910px;font-family:'Liberation Serif',serif;font-style:italic;font-size:19px;letter-spacing:0.05px;color:#0f1a30;-webkit-text-stroke:0.12px #0f1a30"><span class="w">Inhalt<svg class="wv" style="top:18px"><rect width="100%" height="3" fill="url(#wv)"/></svg></span> <span class="w">Spalte<svg class="wv" style="top:18px"><rect width="100%" height="3" fill="url(#wv)"/></svg></span> B <span class="w">Zeile<svg class="wv" style="top:18px"><rect width="100%" height="3" fill="url(#wv)"/></svg></span> 4</div>
<div class="t" style="left:746px;top:737px;font-size:14px;letter-spacing:0.97px;color:#101828;-webkit-text-stroke:0.15px #101828"><span class="w">Inhalt<svg class="wv" style="top:14px"><rect width="100%" height="3" fill="url(#wv)"/></svg></span> <span class="w">Spalte<svg class="wv" style="top:14px"><rect width="100%" height="3" fill="url(#wv)"/></svg></span> A <span class="w">Zeile<svg class="wv" style="top:14px"><rect width="100%" height="3" fill="url(#wv)"/></svg></span> 2</div>
<div class="t" style="left:746px;top:754px;font-family:'Liberation Serif',serif;font-style:italic;font-size:19px;letter-spacing:0.05px;color:#0f1a30;-webkit-text-stroke:0.12px #0f1a30"><span class="w">Inhalt<svg class="wv" style="top:18px"><rect width="100%" height="3" fill="url(#wv)"/></svg></span> <span class="w">Spalte<svg class="wv" style="top:18px"><rect width="100%" height="3" fill="url(#wv)"/></svg></span> B <span class="w">Zeile<svg class="wv" style="top:18px"><rect width="100%" height="3" fill="url(#wv)"/></svg></span> 2</div>
<div class="t" style="left:746px;top:776px;font-family:'Liberation Serif',serif;font-style:italic;font-size:19px;letter-spacing:0.05px;color:#0f1a30;-webkit-text-stroke:0.12px #0f1a30"><span class="w">Inhalt<svg class="wv" style="top:18px"><rect width="100%" height="3" fill="url(#wv)"/></svg></span> <span class="w">Spalte<svg class="wv" style="top:18px"><rect width="100%" height="3" fill="url(#wv)"/></svg></span> B <span class="w">Zeile<svg class="wv" style="top:18px"><rect width="100%" height="3" fill="url(#wv)"/></svg></span> 2</div>
<div class="t" style="left:746px;top:798px;font-family:'Liberation Serif',serif;font-style:italic;font-size:19px;letter-spacing:0.05px;color:#0f1a30;-webkit-text-stroke:0.12px #0f1a30"><span class="w">Inhalt<svg class="wv" style="top:18px"><rect width="100%" height="3" fill="url(#wv)"/></svg></span> <span class="w">Spalte<svg class="wv" style="top:18px"><rect width="100%" height="3" fill="url(#wv)"/></svg></span> A <span class="w">Zeile<svg class="wv" style="top:18px"><rect width="100%" height="3" fill="url(#wv)"/></svg></span> 3</div>
<div class="t" style="left:746px;top:821px;font-family:'Liberation Serif',serif;font-style:italic;font-size:19px;letter-spacing:0.05px;color:#0f1a30;-webkit-text-stroke:0.12px #0f1a30"><span class="w">Inhalt<svg class="wv" style="top:18px"><rect width="100%" height="3" fill="url(#wv)"/></svg></span> <span class="w">Spalte<svg class="wv" style="top:18px"><rect width="100%" height="3" fill="url(#wv)"/></svg></span> B <span class="w">Zeile<svg class="wv" style="top:18px"><rect width="100%" height="3" fill="url(#wv)"/></svg></span> 3</div>
<div class="t" style="left:746px;top:843px;font-family:'Liberation Serif',serif;font-style:italic;font-size:19px;letter-spacing:0.05px;color:#0f1a30;-webkit-text-stroke:0.12px #0f1a30"><span class="w">Inhalt<svg class="wv" style="top:18px"><rect width="100%" height="3" fill="url(#wv)"/></svg></span> <span class="w">Spalte<svg class="wv" style="top:18px"><rect width="100%" height="3" fill="url(#wv)"/></svg></span> B <span class="w">Zeile<svg class="wv" style="top:18px"><rect width="100%" height="3" fill="url(#wv)"/></svg></span> 3</div>
<div class="t" style="left:746px;top:866px;font-family:'Liberation Serif',serif;font-style:italic;font-size:19px;letter-spacing:0.05px;color:#0f1a30;-webkit-text-stroke:0.12px #0f1a30"><span class="w">Inhalt<svg class="wv" style="top:18px"><rect width="100%" height="3" fill="url(#wv)"/></svg></span> <span class="w">Spalte<svg class="wv" style="top:18px"><rect width="100%" height="3" fill="url(#wv)"/></svg></span> A <span class="w">Zeile<svg class="wv" style="top:18px"><rect width="100%" height="3" fill="url(#wv)"/></svg></span> 4</div>
<div class="t" style="left:746px;top:888px;font-family:'Liberation Serif',serif;font-style:italic;font-size:19px;letter-spacing:0.05px;color:#0f1a30;-webkit-text-stroke:0.12px #0f1a30"><span class="w">Inhalt<svg class="wv" style="top:18px"><rect width="100%" height="3" fill="url(#wv)"/></svg></span> <span class="w">Spalte<svg class="wv" style="top:18px"><rect width="100%" height="3" fill="url(#wv)"/></svg></span> B <span class="w">Zeile<svg class="wv" style="top:18px"><rect width="100%" height="3" fill="url(#wv)"/></svg></span> 4</div>
<div class="t" style="left:746px;top:910px;font-family:'Liberation Serif',serif;font-style:italic;font-size:19px;letter-spacing:0.05px;color:#0f1a30;-webkit-text-stroke:0.12px #0f1a30"><span class="w">Inhalt<svg class="wv" style="top:18px"><rect width="100%" height="3" fill="url(#wv)"/></svg></span> <span class="w">Spalte<svg class="wv" style="top:18px"><rect width="100%" height="3" fill="url(#wv)"/></svg></span> B <span class="w">Zeile<svg class="wv" style="top:18px"><rect width="100%" height="3" fill="url(#wv)"/></svg></span> 4</div>
<div class="t" style="left:980px;top:737px;font-size:14px;letter-spacing:0.97px;color:#101828;-webkit-text-stroke:0.15px #101828"><span class="w">Inhalt<svg class="wv" style="top:14px"><rect width="100%" height="3" fill="url(#wv)"/></svg></span> <span class="w">Spalte<svg class="wv" style="top:14px"><rect width="100%" height="3" fill="url(#wv)"/></svg></span> A <span class="w">Zeile<svg class="wv" style="top:14px"><rect width="100%" height="3" fill="url(#wv)"/></svg></span> 2</div>
<div class="t" style="left:980px;top:754px;font-family:'Liberation Serif',serif;font-style:italic;font-size:19px;letter-spacing:0.05px;color:#0f1a30;-webkit-text-stroke:0.12px #0f1a30"><span class="w">Inhalt<svg class="wv" style="top:18px"><rect width="100%" height="3" fill="url(#wv)"/></svg></span> <span class="w">Spalte<svg class="wv" style="top:18px"><rect width="100%" height="3" fill="url(#wv)"/></svg></span> B <span class="w">Zeile<svg class="wv" style="top:18px"><rect width="100%" height="3" fill="url(#wv)"/></svg></span> 2</div>
<div class="t" style="left:980px;top:776px;font-family:'Liberation Serif',serif;font-style:italic;font-size:19px;letter-spacing:0.05px;color:#0f1a30;-webkit-text-stroke:0.12px #0f1a30"><span class="w">Inhalt<svg class="wv" style="top:18px"><rect width="100%" height="3" fill="url(#wv)"/></svg></span> <span class="w">Spalte<svg class="wv" style="top:18px"><rect width="100%" height="3" fill="url(#wv)"/></svg></span> B <span class="w">Zeile<svg class="wv" style="top:18px"><rect width="100%" height="3" fill="url(#wv)"/></svg></span> 2</div>
<div class="t" style="left:980px;top:798px;font-family:'Liberation Serif',serif;font-style:italic;font-size:19px;letter-spacing:0.05px;color:#0f1a30;-webkit-text-stroke:0.12px #0f1a30"><span class="w">Inhalt<svg class="wv" style="top:18px"><rect width="100%" height="3" fill="url(#wv)"/></svg></span> <span class="w">Spalte<svg class="wv" style="top:18px"><rect width="100%" height="3" fill="url(#wv)"/></svg></span> A <span class="w">Zeile<svg class="wv" style="top:18px"><rect width="100%" height="3" fill="url(#wv)"/></svg></span> 3</div>
<div class="t" style="left:980px;top:821px;font-family:'Liberation Serif',serif;font-style:italic;font-size:19px;letter-spacing:0.05px;color:#0f1a30;-webkit-text-stroke:0.12px #0f1a30"><span class="w">Inhalt<svg class="wv" style="top:18px"><rect width="100%" height="3" fill="url(#wv)"/></svg></span> <span class="w">Spalte<svg class="wv" style="top:18px"><rect width="100%" height="3" fill="url(#wv)"/></svg></span> B <span class="w">Zeile<svg class="wv" style="top:18px"><rect width="100%" height="3" fill="url(#wv)"/></svg></span> 3</div>
<div class="t" style="left:980px;top:843px;font-family:'Liberation Serif',serif;font-style:italic;font-size:19px;letter-spacing:0.05px;color:#0f1a30;-webkit-text-stroke:0.12px #0f1a30"><span class="w">Inhalt<svg class="wv" style="top:18px"><rect width="100%" height="3" fill="url(#wv)"/></svg></span> <span class="w">Spalte<svg class="wv" style="top:18px"><rect width="100%" height="3" fill="url(#wv)"/></svg></span> B <span class="w">Zeile<svg class="wv" style="top:18px"><rect width="100%" height="3" fill="url(#wv)"/></svg></span> 3</div>
<div class="t" style="left:980px;top:866px;font-family:'Liberation Serif',serif;font-style:italic;font-size:19px;letter-spacing:0.05px;color:#0f1a30;-webkit-text-stroke:0.12px #0f1a30"><span class="w">Inhalt<svg class="wv" style="top:18px"><rect width="100%" height="3" fill="url(#wv)"/></svg></span> <span class="w">Spalte<svg class="wv" style="top:18px"><rect width="100%" height="3" fill="url(#wv)"/></svg></span> A <span class="w">Zeile<svg class="wv" style="top:18px"><rect width="100%" height="3" fill="url(#wv)"/></svg></span> 4</div>
<div class="t" style="left:980px;top:888px;font-family:'Liberation Serif',serif;font-style:italic;font-size:19px;letter-spacing:0.05px;color:#0f1a30;-webkit-text-stroke:0.12px #0f1a30"><span class="w">Inhalt<svg class="wv" style="top:18px"><rect width="100%" height="3" fill="url(#wv)"/></svg></span> <span class="w">Spalte<svg class="wv" style="top:18px"><rect width="100%" height="3" fill="url(#wv)"/></svg></span> B <span class="w">Zeile<svg class="wv" style="top:18px"><rect width="100%" height="3" fill="url(#wv)"/></svg></span> 4</div>
<div class="t" style="left:980px;top:910px;font-family:'Liberation Serif',serif;font-style:italic;font-size:19px;letter-spacing:0.05px;color:#0f1a30;-webkit-text-stroke:0.12px #0f1a30"><span class="w">Inhalt<svg class="wv" style="top:18px"><rect width="100%" height="3" fill="url(#wv)"/></svg></span> <span class="w">Spalte<svg class="wv" style="top:18px"><rect width="100%" height="3" fill="url(#wv)"/></svg></span> B <span class="w">Zeile<svg class="wv" style="top:18px"><rect width="100%" height="3" fill="url(#wv)"/></svg></span> 4</div>
<div class="a" style="left:980px;top:931px;width:1px;height:16px;background:#000"></div>
<div class="a" style="left:1856px;top:110px;width:2px;height:890px;background:#fff"></div>
<div class="a" style="left:1857px;top:110px;width:16px;height:890px;background:#f0f0f0"></div>
<div class="a" style="left:1857px;top:128px;width:15px;height:444px;background:#cdcdcd"></div>
<div class="a" style="left:1873px;top:110px;width:1px;height:890px;background:#fff"></div>
<div class="a" style="left:1874px;top:110px;width:6px;height:890px;background:#f0f0f0"></div>
<div class="a" style="left:1880px;top:110px;width:1px;height:890px;background:#888"></div>
<div class="a" style="left:1881px;top:110px;width:38px;height:890px;background:#f0f0f0;border-top:1px solid #999"></div>
<div class="a" style="left:1918px;top:110px;width:1px;height:890px;background:#aaa"></div>
<svg style="left:1860px;top:117px" width="9" height="6" viewBox="0 0 9 6"><path d="M1 5l3.5-3.5L8 5" stroke="#555" stroke-width="1.8" fill="none"/></svg>
<svg style="left:1860px;top:938px" width="9" height="6" viewBox="0 0 9 6"><path d="M1 1l3.5 3.5L8 1" stroke="#555" stroke-width="1.8" fill="none"/></svg>
<div class="a" style="left:1857px;top:950px;width:15px;height:15px;background:#f3f3f3;border:1px solid #c9c9c9"></div>
<div class="a" style="left:1857px;top:967px;width:15px;height:15px;background:#f3f3f3;border:1px solid #c9c9c9"></div>
<div class="a" style="left:1857px;top:984px;width:15px;height:15px;background:#f3f3f3;border:1px solid #c9c9c9"></div>
<svg style="left:1859px;top:953px" width="11" height="9" viewBox="0 0 11 9"><path d="M1 4.5L5.5 0.5 10 4.5zM1 9L5.5 5 10 9z" fill="#000"/></svg>
<svg style="left:1860px;top:970px" width="9" height="9" viewBox="0 0 9 9"><circle cx="4.5" cy="4.5" r="3.8" fill="#5a8ab5" stroke="#2a4a6a" stroke-width="0.8"/><circle cx="4" cy="3.6" r="1.8" fill="#9cc0e0"/></svg>
<svg style="left:1859px;top:987px" width="11" height="9" viewBox="0 0 11 9"><path d="M1 0.5h9L5.5 4.5zM1 5h9L5.5 9z" fill="#000"/></svg>
<svg style="left:1893px;top:124px" width="14" height="10" viewBox="0 0 14 10"><path d="M0 0.5h9M0 3h9M0 5.5h9" stroke="#2a3a5a" stroke-width="1.2"/><path d="M5 6.5h7L8.5 10z" fill="#0d1a3a"/></svg>
<div class="a" style="left:1889px;top:148px;width:24px;height:1px;background:#d7d7d7"></div>
<div class="a" style="left:1884px;top:152px;width:32px;height:32px;border:1px solid #9c9c9c;border-radius:4px"></div>
<svg style="left:1889px;top:156px" width="22" height="22" viewBox="0 0 22 22"><ellipse cx="11" cy="20.5" rx="8" ry="1.5" fill="#ccc"/><path d="M11 1l9 5-9 5-9-5z" fill="#7ed52a"/><path d="M11 1l-9 5 4.5 2.5 9-5z" fill="#2aa8f5"/><path d="M2 6l9 5v10l-9-5z" fill="#1a90e8"/><path d="M11 11l9-5v10l-9 5z" fill="#6cc820"/><path d="M6.5 13.5l4.5 2.5v5l-4.5-2.5z" fill="#82dc30"/><path d="M6.5 3.5l9 5M15.5 3.5l-9 5M6.5 8.5v10M2 11l9 5 9-5M15.5 8.5v10" stroke="#fff" stroke-width="0.7" fill="none" opacity="0.85"/></svg>
<svg style="left:1888px;top:190px" width="24" height="26" viewBox="0 0 24 26"><ellipse cx="12" cy="24" rx="9" ry="1.5" fill="#ccc"/><path d="M4 21L8 8l7 8z" fill="#1a7ad0"/><path d="M8 8c3-3 8 0 7 8" fill="#10304a"/><path d="M4 9c0-4 5-5 7-2-2 0-4 0-5 3z" fill="#d06a10"/><path d="M13 16c2-2 7-2 7 2s-4 4-6 3z" fill="#5ab030"/><circle cx="4" cy="13" r="2.2" fill="#f06ac0"/><circle cx="12" cy="4" r="2" fill="#c070f0"/><path d="M19 1l1.3 2.7 3 .4-2.2 2 .6 3-2.7-1.5-2.7 1.5.6-3-2.2-2 3-.4z" fill="#f5d040" stroke="#d0a020" stroke-width="0.5"/><circle cx="21" cy="13" r="2" fill="#f05a7a"/></svg>
<svg style="left:1887px;top:225px" width="26" height="24" viewBox="0 0 26 24"><ellipse cx="13" cy="21.5" rx="9" ry="1.5" fill="#ccc"/><path d="M1 8l18-6 5 11-18 6z" fill="#fff" stroke="#aaa" stroke-width="0.8"/><path d="M3.5 8.5l14-4.5 3.5 8-14 4.5z" fill="#5ab0e8"/><path d="M6 15l4-4 3 3 8-3 0 1.5-14 4.5z" fill="#4aa030"/><path d="M9 12l3-3 3 2v3l-5 1.5z" fill="#fff" stroke="#2a5a9a" stroke-width="0.8"/><path d="M4 8.5l5-1.5" stroke="#7ad02a" stroke-width="1.5"/></svg>
<svg style="left:1888px;top:259px" width="24" height="26" viewBox="0 0 24 26"><ellipse cx="12" cy="24" rx="8" ry="1.5" fill="#ccc"/><circle cx="12" cy="13" r="10" fill="#f39c12"/><circle cx="12" cy="13" r="7.8" fill="#fff"/><path d="M12 5.5v15M4.5 13h15" stroke="#ccc" stroke-width="0.8"/><path d="M17.5 7.5L13.5 14.5 10.5 11.5z" fill="#e53935"/><path d="M6.5 18.5L10.5 11.5 13.5 14.5z" fill="#1e6fd9"/><text x="12" y="10" font-size="6.5" font-weight="bold" font-family="Liberation Sans" fill="#333" text-anchor="middle">N</text></svg>
<svg style="left:1876px;top:545px" width="4" height="36" viewBox="0 0 4 36"><path d="M0 0l3 2.5L0 5z" fill="#555"/><rect x="0" y="9" width="2" height="1" fill="#666"/><rect x="0" y="13" width="2" height="1" fill="#666"/><rect x="0" y="17" width="2" height="1" fill="#666"/><rect x="0" y="21" width="2" height="1" fill="#666"/><rect x="0" y="25" width="2" height="1" fill="#666"/><path d="M0 31l3 2.5L0 36z" fill="#555"/></svg>
<div class="a" style="left:30px;top:108px;width:327px;height:86px;background:#f4f5f7;border:1px solid #e2e3e6;border-bottom:2px solid #e6e7ea"></div>
<div class="a" style="left:32px;top:109px;width:323px;height:23px;background:#bdbdbd"></div>
<div class="t" style="left:34px;top:115px;font-size:12px;color:#111">Tabelle</div>
<svg style="left:314px;top:116px" width="11" height="6" viewBox="0 0 11 6"><path d="M0 0h11L5.5 6z" fill="#000"/></svg>
<svg style="left:336px;top:114px" width="12" height="11" viewBox="0 0 12 11"><path d="M0.5 0.5l11 10M11.5 0.5l-11 10" stroke="#000" stroke-width="1.3"/></svg>
<svg style="left:39px;top:141px" width="16" height="13" viewBox="0 0 16 13"><rect x="0.5" y="0.5" width="15" height="12" fill="#dde3ea" stroke="#8a98a8"/><path d="M0.5 3.5h15" stroke="#a9b4c0"/><path d="M0.5 6.5h15" stroke="#a9b4c0"/><path d="M0.5 9.5h15" stroke="#a9b4c0"/><path d="M5.5 0.5v12" stroke="#a9b4c0"/><path d="M10.5 0.5v12" stroke="#a9b4c0"/></svg>
<svg style="left:63px;top:145px" width="5" height="3" viewBox="0 0 5 3"><path d="M0 0h5L2.5 3z" fill="#000"/></svg>
<div class="a" style="left:75px;top:140px;width:1px;height:15px;background:#c8c9cc"></div>
<svg style="left:83px;top:139px" width="16" height="16" viewBox="0 0 16 16"><rect x="0" y="0" width="16" height="2.5" fill="#1d2630"/><rect x="0" y="6" width="16" height="1.8" fill="#2a333d"/><rect x="0" y="11" width="16" height="1" fill="#2a333d"/><path d="M0 15.5h16" stroke="#2a333d" stroke-dasharray="2 1.5"/></svg>
<svg style="left:107px;top:145px" width="5" height="3" viewBox="0 0 5 3"><path d="M0 0h5L2.5 3z" fill="#000"/></svg>
<svg style="left:120px;top:140px" width="14" height="14" viewBox="0 0 14 14"><rect x="0.5" y="0.5" width="11" height="11" fill="#e8ecf0" stroke="#1d2630" stroke-width="1.2"/><rect x="6" y="6" width="8" height="8" fill="#000"/></svg>
<svg style="left:143px;top:145px" width="5" height="3" viewBox="0 0 5 3"><path d="M0 0h5L2.5 3z" fill="#000"/></svg>
<div class="a" style="left:155px;top:140px;width:1px;height:15px;background:#c8c9cc"></div>
<svg style="left:165px;top:141px" width="13" height="13" viewBox="0 0 13 13"><rect x="0.5" y="0.5" width="11.5" height="11.5" fill="#e3e8ee" stroke="#1d2630" stroke-width="1.2"/></svg>
<svg style="left:186px;top:145px" width="5" height="3" viewBox="0 0 5 3"><path d="M0 0h5L2.5 3z" fill="#000"/></svg>
<svg style="left:199px;top:139px" width="16" height="16" viewBox="0 0 16 16"><path d="M2 5c0-3 8-3 9 0v5H2z" fill="#c8ced4" stroke="#333" stroke-width="0.8"/><ellipse cx="6" cy="3.5" rx="3.5" ry="2" fill="#dfe3e8" stroke="#333" stroke-width="0.8"/><path d="M9.5 3.5c3 0 4 2 4 6" stroke="#2f86d9" stroke-width="1.6" fill="none"/><rect x="0.5" y="12" width="15.5" height="3.5" fill="#fff" stroke="#000" stroke-width="1.1"/></svg>
<svg style="left:223px;top:145px" width="5" height="3" viewBox="0 0 5 3"><path d="M0 0h5L2.5 3z" fill="#000"/></svg>
<div class="a" style="left:235px;top:140px;width:1px;height:15px;background:#c8c9cc"></div>
<svg style="left:244px;top:141px" width="16" height="13" viewBox="0 0 16 13"><rect x="0.5" y="0.5" width="15" height="12" fill="#fff" stroke="#8a98a8"/><path d="M0.5 3.5h15" stroke="#a9b4c0"/><path d="M0.5 6.5h15" stroke="#a9b4c0"/><path d="M0.5 9.5h15" stroke="#a9b4c0"/><path d="M5.5 0.5v12" stroke="#a9b4c0"/><path d="M10.5 0.5v12" stroke="#a9b4c0"/><rect x="5" y="4" width="10.5" height="3.5" fill="#f7c600" stroke="#e07a10" stroke-width="0.8"/></svg>
<svg style="left:269px;top:141px" width="16" height="13" viewBox="0 0 16 13"><rect x="0.5" y="0.5" width="15" height="12" fill="#fff" stroke="#8a98a8"/><path d="M0.5 3.5h15" stroke="#a9b4c0"/><path d="M0.5 6.5h15" stroke="#a9b4c0"/><path d="M0.5 9.5h15" stroke="#a9b4c0"/><path d="M5.5 0.5v12" stroke="#a9b4c0"/><path d="M10.5 0.5v12" stroke="#a9b4c0"/><rect x="5" y="4" width="10.5" height="3.5" fill="#f7c600" stroke="#e07a10" stroke-width="0.8" stroke-dasharray="2 1"/></svg>
<svg style="left:293px;top:142px" width="16" height="12" viewBox="0 0 16 12"><rect x="0.5" y="0.5" width="15" height="11" fill="#fff" stroke="#8a98a8"/><path d="M0.5 3.2h15" stroke="#a9b4c0"/><path d="M0.5 6.0h15" stroke="#a9b4c0"/><path d="M0.5 8.8h15" stroke="#a9b4c0"/><path d="M5.5 0.5v11" stroke="#a9b4c0"/><path d="M10.5 0.5v11" stroke="#a9b4c0"/><path d="M4 5l3 3 6-7" stroke="#2a8a1a" stroke-width="2.2" fill="none"/><path d="M4 5l3 3 6-7" stroke="#7ad02a" stroke-width="1" fill="none"/></svg>
<svg style="left:317px;top:145px" width="5" height="3" viewBox="0 0 5 3"><path d="M0 0h5L2.5 3z" fill="#000"/></svg>
<svg style="left:40px;top:170px" width="16" height="14" viewBox="0 0 16 14"><rect x="0.5" y="0.5" width="15" height="13" fill="#eef2f6" stroke="#7d8894"/><path d="M2.5 2.5h5M2.5 5.0h4M2.5 7.5h5" stroke="#1f63c8" stroke-width="1.2"/><path d="M11.5 12V3M9 5.5l2.5-3 2.5 3" stroke="#e01a10" stroke-width="1.5" fill="none"/></svg>
<svg style="left:65px;top:170px" width="16" height="14" viewBox="0 0 16 14"><rect x="0.5" y="0.5" width="15" height="13" fill="#eef2f6" stroke="#7d8894"/><path d="M2.5 3.5h5M2.5 6.0h4M2.5 8.5h5" stroke="#1f63c8" stroke-width="1.2"/><path d="M11.5 2v10M9 4.5l2.5-2.5 2.5 2.5M9 9.5l2.5 2.5 2.5-2.5" stroke="#e01a10" stroke-width="1.5" fill="none"/></svg>
<svg style="left:90px;top:170px" width="16" height="14" viewBox="0 0 16 14"><rect x="0.5" y="0.5" width="15" height="13" fill="#eef2f6" stroke="#7d8894"/><path d="M2.5 6.5h5M2.5 9.0h4M2.5 11.5h5" stroke="#1f63c8" stroke-width="1.2"/><path d="M11.5 2v9M9 8.5l2.5 3 2.5-3" stroke="#e01a10" stroke-width="1.5" fill="none"/></svg>
<div class="a" style="left:114px;top:170px;width:1px;height:15px;background:#c8c9cc"></div>
<svg style="left:123px;top:172px" width="16" height="12" viewBox="0 0 16 12"><rect x="0.5" y="0.5" width="15" height="11" fill="#fff" stroke="#8a98a8"/><path d="M0.5 3.2h15" stroke="#a9b4c0"/><path d="M0.5 6.0h15" stroke="#a9b4c0"/><path d="M0.5 8.8h15" stroke="#a9b4c0"/><path d="M5.5 0.5v11" stroke="#a9b4c0"/><path d="M10.5 0.5v11" stroke="#a9b4c0"/><rect x="0.5" y="6" width="15" height="3" fill="#8fdc3a" stroke="#3a9a10" stroke-width="0.8"/><path d="M4.5 -2v7M1 1.5h7" stroke="#3a9a10" stroke-width="3"/><path d="M4.5 -1.5v6M1.5 1.5h6" stroke="#a8e050" stroke-width="1.4"/></svg>
<svg style="left:148px;top:172px" width="16" height="12" viewBox="0 0 16 12"><rect x="0.5" y="0.5" width="15" height="11" fill="#fff" stroke="#8a98a8"/><path d="M0.5 3.2h15" stroke="#a9b4c0"/><path d="M0.5 6.0h15" stroke="#a9b4c0"/><path d="M0.5 8.8h15" stroke="#a9b4c0"/><path d="M5.5 0.5v11" stroke="#a9b4c0"/><path d="M10.5 0.5v11" stroke="#a9b4c0"/><rect x="5.5" y="0" width="4.5" height="12" fill="#8fdc3a" stroke="#3a9a10" stroke-width="0.8"/><path d="M4.5 -2v7M1 1.5h7" stroke="#3a9a10" stroke-width="3"/><path d="M4.5 -1.5v6M1.5 1.5h6" stroke="#a8e050" stroke-width="1.4"/></svg>
<svg style="left:173px;top:172px" width="16" height="12" viewBox="0 0 16 12"><rect x="0.5" y="0.5" width="15" height="11" fill="#fff" stroke="#8a98a8"/><path d="M0.5 3.2h15" stroke="#a9b4c0"/><path d="M0.5 6.0h15" stroke="#a9b4c0"/><path d="M0.5 8.8h15" stroke="#a9b4c0"/><path d="M5.5 0.5v11" stroke="#a9b4c0"/><path d="M10.5 0.5v11" stroke="#a9b4c0"/><rect x="0.5" y="6" width="15" height="3" fill="#e83a3a" stroke="#b01a1a" stroke-width="0.6"/></svg>
<svg style="left:198px;top:171px" width="16" height="13" viewBox="0 0 16 13"><rect x="0.5" y="0.5" width="15" height="12" fill="#fff" stroke="#8a98a8"/><path d="M0.5 3.5h15" stroke="#a9b4c0"/><path d="M0.5 6.5h15" stroke="#a9b4c0"/><path d="M0.5 9.5h15" stroke="#a9b4c0"/><path d="M5.5 0.5v12" stroke="#a9b4c0"/><path d="M10.5 0.5v12" stroke="#a9b4c0"/><rect x="5.5" y="0" width="5" height="13" fill="#e83a3a" stroke="#b01a1a" stroke-width="0.6"/></svg>
<div class="a" style="left:222px;top:170px;width:1px;height:15px;background:#c8c9cc"></div>
<svg style="left:231px;top:169px" width="16" height="16" viewBox="0 0 16 16"><rect x="0.5" y="3.5" width="10" height="11" fill="#e8eef4" stroke="#6f7a86"/><path d="M2.5 7.5h6M2.5 9.5h6M2.5 11.5h5" stroke="#4f82c0"/><path d="M5 3l10 11" stroke="#222" stroke-width="2"/><path d="M2 1.5l1 1.5 1.5 0-1 1 .5 1.5-1.5-1-1.5 1 .5-1.5-1-1h1.5z" fill="#f5c800"/><path d="M8 0l.6 1 1 .2-.8.7.2 1-1-.5-.9.5.2-1-.8-.7 1-.2z" fill="#f5c800"/><path d="M12 2l.5.8.9.1-.7.6.2.9-.9-.4-.8.4.2-.9-.7-.6.9-.1z" fill="#f5c800"/></svg>
<svg style="left:256px;top:169px" width="16" height="16" viewBox="0 0 16 16"><rect x="3.5" y="0.5" width="12" height="12" fill="#eef1f4" stroke="#7d8894"/><path d="M3.5 4.5h12M3.5 8.5h12M7.5 0.5v12M11.5 0.5v12" stroke="#9aa5b0"/><rect x="0.5" y="5.5" width="7" height="9" fill="#eef1f4" stroke="#6f7a86"/><path d="M2.5 8.5h3M4 8.5v5" stroke="#333" stroke-width="1.2"/></svg>
<div class="a" style="left:280px;top:170px;width:1px;height:15px;background:#c8c9cc"></div>
<svg style="left:291px;top:168px" width="11" height="18" viewBox="0 0 11 18"><text x="5.5" y="8.5" font-size="10" font-weight="bold" font-family="Liberation Sans" fill="#1f6fd0" text-anchor="middle">A</text><text x="5.5" y="17.5" font-size="10" font-weight="bold" font-family="Liberation Sans" fill="#5a5f66" text-anchor="middle">Z</text></svg>
<div class="a" style="left:313px;top:170px;width:1px;height:15px;background:#c8c9cc"></div>
<svg style="left:323px;top:171px" width="14" height="14" viewBox="0 0 14 14"><path d="M12.5 1.5H1.5l5 5.5-5 5.5h11" stroke="#1f4fa0" stroke-width="2.8" fill="none" stroke-linejoin="round"/><path d="M12.5 1.5H1.5l5 5.5-5 5.5h11" stroke="#4fb0f0" stroke-width="1.2" fill="none" stroke-linejoin="round"/></svg>
</body></html>
